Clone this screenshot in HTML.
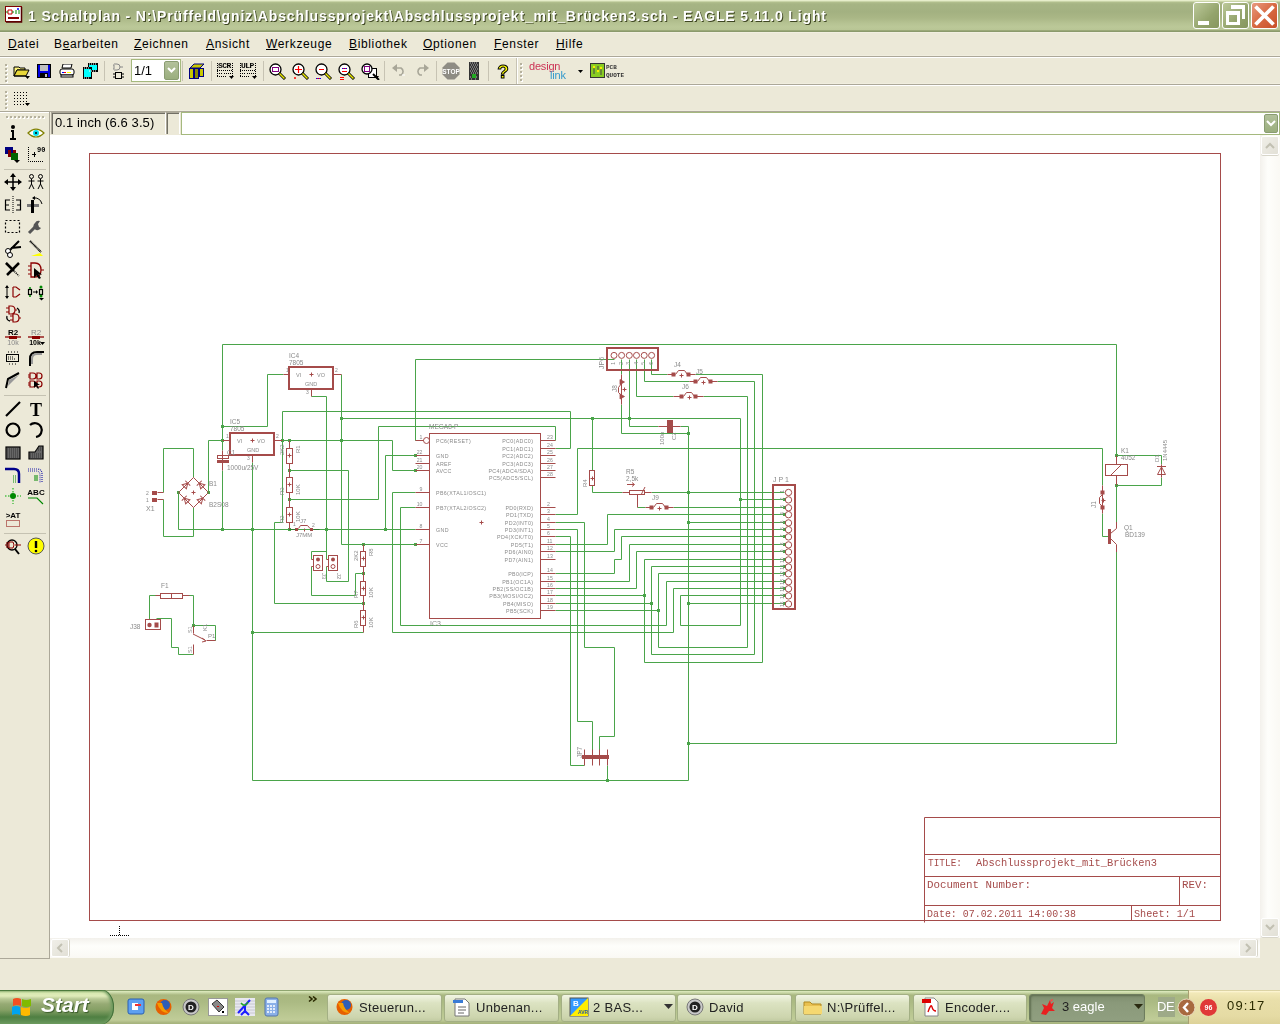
<!DOCTYPE html>
<html><head><meta charset="utf-8"><style>
*{margin:0;padding:0;box-sizing:border-box}
html,body{width:1280px;height:1024px;overflow:hidden;background:#ECE9D8;font-family:"Liberation Sans",sans-serif;font-size:12px;color:#000;position:relative}
.a{position:absolute;will-change:transform}
#title{left:0;top:0;width:1280px;height:32px;background:linear-gradient(#E6EDCA 0px,#E6EDCA 1px,#C9D4A8 1px,#C9D4A8 2px,#B3C08E 2px,#A6B484 4px,#A3B181 12px,#AAB786 18px,#B5C292 23px,#BBC898 27px,#B8C595 30px,#9AA878 30px,#9AA878 31px,#8B9A6C 31px,#8B9A6C 32px)}
#title .t{left:28px;top:8px;font-weight:bold;font-size:14px;color:#fff;text-shadow:1px 1px 0 #3E4622;letter-spacing:0.86px;white-space:nowrap}
.menu span{position:absolute;top:37px;font-size:12px;letter-spacing:0.65px}
.menu u{text-decoration:underline;text-underline-offset:1px}
.hl{position:absolute;left:0;width:1280px;height:1px}
.sep{position:absolute;width:1px;height:21px;background:#C5C2B2}
.grip{position:absolute;width:2px;background:repeating-linear-gradient(#fff 0 1px,#ACA899 1px 2px,transparent 2px 3px)}
.tb{position:absolute}
.btn{position:absolute;border-radius:3px;height:28px;top:994px;background:linear-gradient(#F2F5E4,#DCE3C2 30%,#CDD5AE 85%,#C2CBA2);border:1px solid #A3AF84;font-size:13px;color:#222;padding-left:31px;line-height:26px;white-space:nowrap;overflow:hidden;letter-spacing:0.3px}
</style></head><body>
<div id="title" class="a"><div class="a t">1 Schaltplan - N:\Prüffeld\gniz\Abschlussprojekt\Abschlussprojekt_mit_Brücken3.sch - EAGLE 5.11.0 Light</div></div><svg class="a" style="left:5px;top:6px" width="18" height="17" viewBox="0 0 18 17"><rect x="0.5" y="0.5" width="16" height="15" fill="#fff" stroke="#800000"/><path d="M16.5 1V16H1" stroke="#500" stroke-width="1.5" fill="none"/><path d="M3 4H7V8H3Z" fill="none" stroke="#C00"/><path d="M3 6H1M7 6H9M11 4V8M14 4V8" stroke="#080"/><path d="M3 12H14" stroke="#800" stroke-width="2"/><circle cx="13" cy="3" r="1" fill="#00f"/></svg><div class="a" style="left:1193px;top:2px;width:27px;height:27px;border:1px solid #fff;border-radius:3px;background:linear-gradient(135deg,#BCC99A,#94A46C 60%,#86965E)"></div><div class="a" style="left:1222px;top:2px;width:27px;height:27px;border:1px solid #fff;border-radius:3px;background:linear-gradient(135deg,#BCC99A,#94A46C 60%,#86965E)"></div><div class="a" style="left:1251px;top:2px;width:27px;height:27px;border:1px solid #fff;border-radius:3px;background:linear-gradient(135deg,#E89A80,#D86A42 50%,#C85028)"></div><div class="a" style="left:1198px;top:21px;width:11px;height:4px;background:#fff"></div><div class="a" style="left:1226px;top:11px;width:14px;height:14px;border:3px solid #fff;border-top-width:4px"></div><div class="a" style="left:1231px;top:5px;width:14px;height:14px;border:3px solid #fff;border-top-width:4px;border-left:none;border-bottom:none"></div><svg class="a" style="left:1253px;top:4px" width="23" height="23" viewBox="0 0 23 23"><path d="M2.5 2.5L20.5 20.5M20.5 2.5L2.5 20.5" stroke="#fff" stroke-width="3.8"/></svg><div class="menu"><span style="left:8px"><u>D</u>atei</span><span style="left:54px">B<u>e</u>arbeiten</span><span style="left:134px"><u>Z</u>eichnen</span><span style="left:206px"><u>A</u>nsicht</span><span style="left:266px"><u>W</u>erkzeuge</span><span style="left:349px"><u>B</u>ibliothek</span><span style="left:423px"><u>O</u>ptionen</span><span style="left:494px"><u>F</u>enster</span><span style="left:556px"><u>H</u>ilfe</span></div><div class="hl" style="top:32px;background:#F2EFE1"></div><div class="hl" style="top:55px;background:#F1EEDF"></div><div class="hl" style="top:56px;background:#ACA899"></div><div class="hl" style="top:57px;background:#fff"></div><div class="hl" style="top:83px;background:#F1EEDF"></div><div class="hl" style="top:84px;background:#ACA899"></div><div class="hl" style="top:85px;background:#fff"></div><div class="hl" style="top:110px;background:#F0EDDE"></div><div class="hl" style="top:111px;background:#ACA899"></div><svg class="a" style="left:13px;top:65px" width="18" height="15" viewBox="0 0 18 15"><path d="M1 2H6L7 3H12V5H4L1 11Z" fill="#FFF47A" stroke="#000" stroke-width="1"/><path d="M1 11L4 5H16L13 11Z" fill="#E8D83A" stroke="#000"/><path d="M1 11H13" stroke="#000"/></svg><svg class="a" style="left:25px;top:76px" width="5" height="3"><path d="M0 0H5L2.5 3Z" fill="#000"/></svg><svg class="a" style="left:37px;top:64px" width="14" height="14" viewBox="0 0 14 14"><rect x="0" y="0" width="14" height="14" fill="#000"/><rect x="1" y="1" width="12" height="12" fill="#0000E0"/><rect x="3" y="1" width="8" height="6" fill="#C0C0C0"/><rect x="3" y="9" width="8" height="4" fill="#000"/><rect x="8" y="10" width="2" height="3" fill="#C0C0C0"/></svg><svg class="a" style="left:59px;top:64px" width="16" height="14" viewBox="0 0 16 14"><path d="M4 0H13L12 4H3Z" fill="#fff" stroke="#000"/><rect x="1" y="5" width="14" height="6" rx="2" fill="#fff" stroke="#000"/><rect x="3" y="8" width="2" height="1" fill="#00f"/><rect x="5" y="8" width="2" height="1" fill="#f00"/><rect x="8" y="8" width="4" height="1" fill="#ff0"/><rect x="2" y="11" width="12" height="2" fill="#fff" stroke="#000"/></svg><svg class="a" style="left:83px;top:63px" width="15" height="16" viewBox="0 0 15 16"><rect x="5" y="0" width="10" height="9" fill="#000"/><rect x="6" y="2" width="8" height="5" fill="#00FFFF"/><rect x="0" y="4" width="9" height="12" fill="#000"/><rect x="1" y="6" width="7" height="8" fill="#00FFFF"/><path d="M6 1h1M8 1h1M10 1h1M12 1h1M1 5h1M3 5h1M5 5h1M1 15h1M3 15h1M5 15h1M6 8h1M8 8h1M10 8h1M12 8h1" stroke="#fff"/></svg><div class="a" style="left:104px;top:61px;width:1px;height:20px;background:#C7C3B3"></div><svg class="a" style="left:113px;top:62px" width="11" height="18" viewBox="0 0 11 18"><path d="M1 2H4A3 3 0 0 1 4 8H1M0 3H1M0 7H1M7 5H10" fill="none" stroke="#888"/><path d="M1 3V7" stroke="#888"/><rect x="2.5" y="10.5" width="6" height="6" fill="none" stroke="#000"/><path d="M0 12H2M0 15H2M9 12H11M9 15H11" stroke="#000"/></svg><div class="a" style="left:131px;top:59px;width:50px;height:23px;background:#fff;border:1px solid #A5B97E"></div><div class="a" style="left:134px;top:61px;font-size:13px;line-height:19px">1/1</div><div class="a" style="left:164px;top:61px;width:15px;height:19px;border-radius:2px;background:linear-gradient(#B3C19B,#9AAE7E);border:1px solid #8A9C72"></div><svg class="a" style="left:167px;top:67px" width="9" height="6" viewBox="0 0 9 6"><path d="M1 1L4.5 4.5L8 1" fill="none" stroke="#fff" stroke-width="2"/></svg><div class="a" style="left:182px;top:61px;width:1px;height:20px;background:#C7C3B3"></div><svg class="a" style="left:188px;top:63px" width="17" height="16" viewBox="0 0 17 16"><path d="M2 5L6 1H16L12 5Z" fill="#C8C800" stroke="#000080"/><rect x="1.5" y="5.5" width="4" height="10" fill="#C8C800" stroke="#000080"/><rect x="6.5" y="5.5" width="4" height="10" fill="#888800" stroke="#000080"/><rect x="11.5" y="5.5" width="4" height="8" fill="#C8C800" stroke="#000080"/></svg><div class="a" style="left:211px;top:61px;width:1px;height:20px;background:#C7C3B3"></div><div class="a" style="left:218px;top:61px;font:bold 8px 'Liberation Mono',monospace;letter-spacing:-0.6px">SCR</div><svg class="a" style="left:217px;top:63px" width="18" height="16" viewBox="0 0 18 16"><path d="M0 7.5H16M0 10.5H5M7 10.5H15M0 13.5H10M0.5 0V14" stroke="#000" stroke-dasharray="1 1" fill="none"/><path d="M15.5 0V13" stroke="#000" stroke-dasharray="1 1"/></svg><svg class="a" style="left:229px;top:76px" width="5" height="3"><path d="M0 0H5L2.5 3Z" fill="#000"/></svg><div class="a" style="left:241px;top:61px;font:bold 8px 'Liberation Mono',monospace;letter-spacing:-0.6px">ULP</div><svg class="a" style="left:240px;top:63px" width="18" height="16" viewBox="0 0 18 16"><path d="M0 7.5H16M0 10.5H5M7 10.5H15M0 13.5H10M0.5 0V14" stroke="#000" stroke-dasharray="1 1" fill="none"/><path d="M15.5 0V13" stroke="#000" stroke-dasharray="1 1"/></svg><svg class="a" style="left:252px;top:76px" width="5" height="3"><path d="M0 0H5L2.5 3Z" fill="#000"/></svg><div class="a" style="left:263px;top:61px;width:1px;height:20px;background:#C7C3B3"></div><svg class="a" style="left:269px;top:63px" width="18" height="17" viewBox="0 0 18 17"><circle cx="6.5" cy="6.5" r="5.5" fill="#fff" stroke="#000" stroke-width="1.3"/><path d="M10 10L16 16" stroke="#000" stroke-width="3"/><path d="M10.5 10.5L15.5 15.5" stroke="#E8E800" stroke-width="1.5"/><rect x="3.5" y="4.5" width="6" height="4" fill="none" stroke="#f00"/><rect x="3.5" y="4.5" width="6" height="4" fill="none" stroke="#00f" stroke-dasharray="1 1"/></svg><svg class="a" style="left:292px;top:63px" width="18" height="17" viewBox="0 0 18 17"><circle cx="6.5" cy="6.5" r="5.5" fill="#fff" stroke="#000" stroke-width="1.3"/><path d="M10 10L16 16" stroke="#000" stroke-width="3"/><path d="M10.5 10.5L15.5 15.5" stroke="#E8E800" stroke-width="1.5"/><path d="M6.5 3V10M3 6.5H10" stroke="#f00" stroke-width="1.2"/><path d="M2 15h2M3 14v2" stroke="#f00"/></svg><svg class="a" style="left:315px;top:63px" width="18" height="17" viewBox="0 0 18 17"><circle cx="6.5" cy="6.5" r="5.5" fill="#fff" stroke="#000" stroke-width="1.3"/><path d="M10 10L16 16" stroke="#000" stroke-width="3"/><path d="M10.5 10.5L15.5 15.5" stroke="#E8E800" stroke-width="1.5"/><path d="M4 6.5H9" stroke="#f00"/><path d="M1 15.5H6" stroke="#f00"/><path d="M1 15.5H6" stroke="#00f" stroke-dasharray="1 1"/></svg><svg class="a" style="left:338px;top:63px" width="18" height="17" viewBox="0 0 18 17"><circle cx="6.5" cy="6.5" r="5.5" fill="#fff" stroke="#000" stroke-width="1.3"/><path d="M10 10L16 16" stroke="#000" stroke-width="3"/><path d="M10.5 10.5L15.5 15.5" stroke="#E8E800" stroke-width="1.5"/><path d="M4 5.5H9M4 8.5H9" stroke="#f00"/><path d="M4 5.5H9" stroke="#00f" stroke-dasharray="1 1"/><path d="M2 14.5H6M2 16.5H6" stroke="#f00"/></svg><svg class="a" style="left:361px;top:63px" width="19" height="17" viewBox="0 0 19 17"><rect x="7.5" y="5.5" width="8" height="9" fill="#fff" stroke="#000"/><circle cx="6" cy="6" r="5" fill="#fff" stroke="#000" stroke-width="1.3"/><rect x="3.5" y="3.5" width="5" height="5" fill="none" stroke="#f00"/><rect x="3.5" y="3.5" width="5" height="5" fill="none" stroke="#00f" stroke-dasharray="1 1"/><path d="M12 11L18 17" stroke="#000" stroke-width="2"/><path d="M14 13h4l-2 3z" fill="#000"/></svg><div class="a" style="left:384px;top:61px;width:1px;height:20px;background:#C7C3B3"></div><svg class="a" style="left:392px;top:64px" width="14" height="12" viewBox="0 0 14 12"><path d="M4 4H9A4 4 0 0 1 9 11H7" fill="none" stroke="#A8A698" stroke-width="1.6"/><path d="M0 4L5 0V8Z" fill="#A8A698"/><path d="M10 11h3" stroke="#fff"/></svg><svg class="a" style="left:415px;top:64px" width="14" height="12" viewBox="0 0 14 12"><path d="M10 4H5A4 4 0 0 0 5 11H7" fill="none" stroke="#A8A698" stroke-width="1.6"/><path d="M14 4L9 0V8Z" fill="#A8A698"/></svg><div class="a" style="left:436px;top:61px;width:1px;height:20px;background:#C7C3B3"></div><svg class="a" style="left:442px;top:62px" width="18" height="18" viewBox="0 0 18 18"><path d="M5.5 0.5H12.5L17.5 5.5V12.5L12.5 17.5H5.5L0.5 12.5V5.5Z" fill="#8E8C84"/><text x="9" y="12" font-family="Liberation Sans" font-weight="bold" font-size="6.5" fill="#fff" text-anchor="middle">STOP</text></svg><svg class="a" style="left:469px;top:62px" width="10" height="18" viewBox="0 0 10 18"><rect x="0" y="0" width="10" height="18" fill="#333"/><path d="M1 1h1M3 1h1M5 1h1M7 1h1M2 3h1M4 3h1M6 3h1M8 3h1M1 5h1M3 5h1M5 5h1M7 5h1M2 7h1M4 7h1M6 7h1M8 7h1M1 9h1M3 9h1M5 9h1M7 9h1M2 11h1M4 11h1M6 11h1M8 11h1M1 15h1M3 15h1M7 15h1M2 17h1M6 17h1" stroke="#bbb"/><rect x="3" y="12" width="4" height="4" fill="#22AA22"/></svg><div class="a" style="left:488px;top:61px;width:1px;height:20px;background:#C7C3B3"></div><svg class="a" style="left:496px;top:62px" width="14" height="18" viewBox="0 0 14 18"><text x="7" y="16" font-family="Liberation Sans" font-weight="bold" font-size="19" fill="#FFFF00" stroke="#000" stroke-width="1" text-anchor="middle">?</text></svg><div class="a" style="left:516px;top:58px;width:1px;height:26px;background:#C7C3B3"></div><div class="a" style="left:517px;top:58px;width:1px;height:26px;background:#fff"></div><div class="a" style="left:520px;top:63px;width:2px;height:2px;background:#B5B19E;box-shadow:1px 1px 0 #fff"></div><div class="a" style="left:520px;top:67px;width:2px;height:2px;background:#B5B19E;box-shadow:1px 1px 0 #fff"></div><div class="a" style="left:520px;top:71px;width:2px;height:2px;background:#B5B19E;box-shadow:1px 1px 0 #fff"></div><div class="a" style="left:520px;top:75px;width:2px;height:2px;background:#B5B19E;box-shadow:1px 1px 0 #fff"></div><div class="a" style="left:520px;top:79px;width:2px;height:2px;background:#B5B19E;box-shadow:1px 1px 0 #fff"></div><div class="a" style="left:529px;top:60px;font:11px 'Liberation Sans',sans-serif;color:#CC3355;letter-spacing:-0.2px">design</div><div class="a" style="left:550px;top:69px;font:11px 'Liberation Sans',sans-serif;color:#3399CC;letter-spacing:-0.2px">link</div><svg class="a" style="left:578px;top:70px" width="5" height="3"><path d="M0 0H5L2.5 3Z" fill="#000"/></svg><svg class="a" style="left:590px;top:63px" width="15" height="15" viewBox="0 0 15 15"><rect x="0.5" y="0.5" width="14" height="14" fill="#88CC22" stroke="#333"/><path d="M4 4V11M8 3V8M11 5V12" stroke="#444"/><circle cx="4" cy="4" r="1.2" fill="#FFEE00"/><circle cx="8" cy="8" r="1.2" fill="#FFEE00"/><circle cx="11" cy="5" r="1.2" fill="#FFEE00"/></svg><div class="a" style="left:606px;top:64px;font:bold 6px 'Liberation Mono',monospace;line-height:8px;color:#333">PCB<br>QUOTE</div><div class="a" style="left:5px;top:64px;width:2px;height:2px;background:#B5B19E;box-shadow:1px 1px 0 #fff"></div><div class="a" style="left:5px;top:68px;width:2px;height:2px;background:#B5B19E;box-shadow:1px 1px 0 #fff"></div><div class="a" style="left:5px;top:72px;width:2px;height:2px;background:#B5B19E;box-shadow:1px 1px 0 #fff"></div><div class="a" style="left:5px;top:76px;width:2px;height:2px;background:#B5B19E;box-shadow:1px 1px 0 #fff"></div><div class="a" style="left:5px;top:80px;width:2px;height:2px;background:#B5B19E;box-shadow:1px 1px 0 #fff"></div><div class="a" style="left:5px;top:91px;width:2px;height:2px;background:#B5B19E;box-shadow:1px 1px 0 #fff"></div><div class="a" style="left:5px;top:95px;width:2px;height:2px;background:#B5B19E;box-shadow:1px 1px 0 #fff"></div><div class="a" style="left:5px;top:99px;width:2px;height:2px;background:#B5B19E;box-shadow:1px 1px 0 #fff"></div><div class="a" style="left:5px;top:103px;width:2px;height:2px;background:#B5B19E;box-shadow:1px 1px 0 #fff"></div><div class="a" style="left:5px;top:107px;width:2px;height:2px;background:#B5B19E;box-shadow:1px 1px 0 #fff"></div><svg class="a" style="left:13px;top:91px" width="18" height="16" viewBox="0 0 18 16"><rect x="1" y="1" width="1" height="1" fill="#000"/><rect x="1" y="4" width="1" height="1" fill="#000"/><rect x="1" y="7" width="1" height="1" fill="#000"/><rect x="1" y="10" width="1" height="1" fill="#000"/><rect x="1" y="13" width="1" height="1" fill="#000"/><rect x="4" y="1" width="1" height="1" fill="#000"/><rect x="4" y="4" width="1" height="1" fill="#000"/><rect x="4" y="7" width="1" height="1" fill="#000"/><rect x="4" y="10" width="1" height="1" fill="#000"/><rect x="4" y="13" width="1" height="1" fill="#000"/><rect x="7" y="1" width="1" height="1" fill="#000"/><rect x="7" y="4" width="1" height="1" fill="#000"/><rect x="7" y="7" width="1" height="1" fill="#000"/><rect x="7" y="10" width="1" height="1" fill="#000"/><rect x="7" y="13" width="1" height="1" fill="#000"/><rect x="10" y="1" width="1" height="1" fill="#000"/><rect x="10" y="4" width="1" height="1" fill="#000"/><rect x="10" y="7" width="1" height="1" fill="#000"/><rect x="10" y="10" width="1" height="1" fill="#000"/><rect x="10" y="13" width="1" height="1" fill="#000"/><rect x="13" y="1" width="1" height="1" fill="#000"/><rect x="13" y="4" width="1" height="1" fill="#000"/><rect x="13" y="7" width="1" height="1" fill="#000"/><rect x="13" y="10" width="1" height="1" fill="#000"/><rect x="13" y="13" width="1" height="1" fill="#000"/></svg><svg class="a" style="left:25px;top:103px" width="5" height="3"><path d="M0 0H5L2.5 3Z" fill="#000"/></svg><div class="a" style="left:0;top:112px;width:50px;height:847px;background:#ECE9D8;border-right:1px solid #ACA899"></div><div class="a" style="left:0;top:958px;width:50px;height:1px;background:#ACA899"></div><div class="a" style="left:0;top:112px;width:49px;height:1px;background:#fff"></div><div class="a" style="left:6px;top:116px;width:2px;height:2px;background:#B5B19E;box-shadow:1px 1px 0 #fff"></div><div class="a" style="left:10px;top:116px;width:2px;height:2px;background:#B5B19E;box-shadow:1px 1px 0 #fff"></div><div class="a" style="left:14px;top:116px;width:2px;height:2px;background:#B5B19E;box-shadow:1px 1px 0 #fff"></div><div class="a" style="left:18px;top:116px;width:2px;height:2px;background:#B5B19E;box-shadow:1px 1px 0 #fff"></div><div class="a" style="left:22px;top:116px;width:2px;height:2px;background:#B5B19E;box-shadow:1px 1px 0 #fff"></div><div class="a" style="left:26px;top:116px;width:2px;height:2px;background:#B5B19E;box-shadow:1px 1px 0 #fff"></div><div class="a" style="left:30px;top:116px;width:2px;height:2px;background:#B5B19E;box-shadow:1px 1px 0 #fff"></div><div class="a" style="left:34px;top:116px;width:2px;height:2px;background:#B5B19E;box-shadow:1px 1px 0 #fff"></div><div class="a" style="left:38px;top:116px;width:2px;height:2px;background:#B5B19E;box-shadow:1px 1px 0 #fff"></div><div class="a" style="left:42px;top:116px;width:2px;height:2px;background:#B5B19E;box-shadow:1px 1px 0 #fff"></div><svg class="a" style="left:4px;top:124px" width="18" height="18" viewBox="0 0 18 18"><circle cx="9" cy="3" r="2" fill="#000"/><path d="M7 6H10V14H12V16H6V14H8V8H7Z" fill="#000"/></svg><svg class="a" style="left:27px;top:124px" width="18" height="18" viewBox="0 0 18 18"><path d="M1 9Q9 1 17 9Q9 17 1 9Z" fill="#fff" stroke="#808000" stroke-width="1.2"/><circle cx="9" cy="9" r="3" fill="#00E0F0"/><circle cx="9" cy="9" r="1" fill="#000"/></svg><svg class="a" style="left:4px;top:146px" width="18" height="18" viewBox="0 0 18 18"><rect x="1" y="1" width="8" height="7" fill="#000080"/><rect x="4" y="4" width="8" height="7" fill="#800000" style="mix-blend-mode:normal"/><rect x="1" y="1" width="8" height="7" fill="#000080"/><rect x="7" y="7" width="7" height="7" fill="#006400"/><rect x="4" y="4" width="3" height="6" fill="#800000"/><rect x="4" y="8" width="3" height="3" fill="#800000"/><path d="M10 14h6l-3 3z" fill="#000"/></svg><svg class="a" style="left:27px;top:146px" width="18" height="18" viewBox="0 0 18 18"><path d="M1.5 1V15.5H17" fill="none" stroke="#000" stroke-dasharray="1 1"/><path d="M5 8.5H9M7.5 6V11" stroke="#000"/><text x="10" y="6" font-family="Liberation Mono" font-weight="bold" font-size="7" fill="#000">90</text></svg><div class="a" style="left:4px;top:169px;width:42px;height:1px;background:#C5C2B2"></div><svg class="a" style="left:4px;top:173px" width="18" height="18" viewBox="0 0 18 18"><path d="M9 1V17M1 9H17" stroke="#000" stroke-width="1.5"/><path d="M9 0L6 4H12ZM9 18L6 14H12ZM0 9L4 6V12ZM18 9L14 6V12Z" fill="#000"/></svg><svg class="a" style="left:27px;top:173px" width="18" height="18" viewBox="0 0 18 18"><circle cx="4.5" cy="3.5" r="2" fill="none" stroke="#000"/><circle cx="13.5" cy="3.5" r="2" fill="none" stroke="#000"/><path d="M4.5 6V11M1.5 8H7.5M4.5 11L2 16M4.5 11L7 16M13.5 6V11M10.5 8H16.5M13.5 11L11 16M13.5 11L16 16" stroke="#000" fill="none"/></svg><svg class="a" style="left:4px;top:196px" width="18" height="18" viewBox="0 0 18 18"><path d="M6 4H1.5V14H6M1 9H5M12 4H16.5V14H12M13 9H17" fill="none" stroke="#000" stroke-width="1.2"/><path d="M9 0V18" stroke="#000" stroke-dasharray="1 1"/></svg><svg class="a" style="left:27px;top:196px" width="18" height="18" viewBox="0 0 18 18"><rect x="0" y="8" width="12" height="3" fill="#777"/><rect x="4" y="4" width="3" height="13" fill="#000"/><path d="M6 2Q13 1 15 8" fill="none" stroke="#000"/><path d="M5 2L8 0V4Z" fill="#000"/></svg><svg class="a" style="left:4px;top:218px" width="18" height="18" viewBox="0 0 18 18"><rect x="1.5" y="2.5" width="14" height="12" fill="none" stroke="#000" stroke-width="1.2" stroke-dasharray="2 2"/></svg><svg class="a" style="left:27px;top:218px" width="18" height="18" viewBox="0 0 18 18"><path d="M2 15L9 8" stroke="#555" stroke-width="3"/><path d="M8 5A4 4 0 1 0 14 10L12 9L11 6L13 3A4 4 0 0 0 8 5" fill="#555"/></svg><svg class="a" style="left:4px;top:240px" width="18" height="18" viewBox="0 0 18 18"><path d="M6 10L15 1M7 8L17 7" stroke="#000" stroke-width="2"/><circle cx="4" cy="11" r="2.5" fill="#fff" stroke="#000"/><circle cx="6" cy="15" r="2.5" fill="#fff" stroke="#000"/></svg><svg class="a" style="left:27px;top:240px" width="18" height="18" viewBox="0 0 18 18"><path d="M3 1L14 12" stroke="#000" stroke-width="2" stroke-dasharray="1 0.5"/><path d="M4 16H16L13 13L10 14Z" fill="#FFFF00"/></svg><svg class="a" style="left:4px;top:261px" width="18" height="18" viewBox="0 0 18 18"><path d="M2 2L15 15" stroke="#000" stroke-width="1.5" stroke-dasharray="1 1"/><path d="M2 2L10 10" stroke="#000" stroke-width="2.5"/><path d="M15 2L3 14" stroke="#000" stroke-width="2.5"/></svg><svg class="a" style="left:27px;top:261px" width="18" height="18" viewBox="0 0 18 18"><path d="M4 2H8Q14 2 14 9Q14 16 8 16H4Z" fill="none" stroke="#8B0000" stroke-width="1.3"/><path d="M1 5H4M1 9H4M1 13H4M14 9H17" stroke="#8B0000"/><path d="M7 7L7 17L9.5 14.5L12 18L14 17L11.5 13.5H15Z" fill="#000"/></svg><svg class="a" style="left:4px;top:283px" width="18" height="18" viewBox="0 0 18 18"><path d="M3 3V15" stroke="#000"/><path d="M3 2L1 5H5ZM3 16L1 13H5Z" fill="#000"/><path d="M9 4H12L16 7M9 14H12L16 11M9 4V14" fill="none" stroke="#8B0000" stroke-width="1.2"/></svg><svg class="a" style="left:27px;top:283px" width="18" height="18" viewBox="0 0 18 18"><rect x="1.5" y="6.5" width="3" height="5" fill="none" stroke="#000" stroke-width="1.2"/><rect x="12.5" y="6.5" width="3" height="5" fill="none" stroke="#000" stroke-width="1.2"/><path d="M6 9H10" stroke="#000"/><path d="M11 9L9 7V11Z" fill="#000"/><circle cx="3" cy="5" r="1" fill="#080"/><circle cx="3" cy="13" r="1" fill="#080"/><circle cx="14" cy="4" r="1.5" fill="#080"/><circle cx="14" cy="13" r="1.5" fill="#080"/><path d="M12 15h5l-2.5 2.5z" fill="#000"/></svg><svg class="a" style="left:4px;top:305px" width="18" height="18" viewBox="0 0 18 18"><path d="M5 1H7Q11 1 11 5Q11 9 7 9H5ZM9 9H11Q15 9 15 13Q15 17 11 17H9Z" fill="none" stroke="#8B0000" stroke-width="1.2"/><path d="M2 3H5M2 7H5M11 5H13M6 11H9M6 15H9M15 13H17" stroke="#8B0000"/><path d="M13 3Q16 5 15 8M3 11Q2 15 6 16" fill="none" stroke="#000" stroke-width="1.3"/></svg><svg class="a" style="left:4px;top:328px" width="18" height="18" viewBox="0 0 18 18"><text x="9" y="7" font-family="Liberation Sans" font-weight="bold" font-size="8" text-anchor="middle" fill="#000">R2</text><path d="M1 9H17" stroke="#8B0000" stroke-width="1.3"/><rect x="5" y="8" width="8" height="3" fill="#8B0000"/><text x="9" y="17" font-family="Liberation Sans" font-size="7" text-anchor="middle" fill="#888">10k</text></svg><svg class="a" style="left:27px;top:328px" width="18" height="18" viewBox="0 0 18 18"><text x="9" y="7" font-family="Liberation Sans" font-size="8" text-anchor="middle" fill="#888">R2</text><path d="M1 9H17" stroke="#8B0000" stroke-width="1.3"/><rect x="5" y="8" width="8" height="3" fill="#8B0000"/><text x="8" y="17" font-family="Liberation Sans" font-weight="bold" font-size="7" text-anchor="middle" fill="#000">10k</text><path d="M13 14h5l-2.5 3z" fill="#000"/></svg><svg class="a" style="left:4px;top:349px" width="18" height="18" viewBox="0 0 18 18"><rect x="2.5" y="5.5" width="12" height="7" fill="none" stroke="#000"/><path d="M4 3h1M7 3h1M10 3h1M13 3h1M5 15h1M8 15h1M11 15h1" stroke="#000"/><path d="M4 8H9M4 10H11" stroke="#000" stroke-dasharray="1 1"/></svg><svg class="a" style="left:27px;top:349px" width="18" height="18" viewBox="0 0 18 18"><path d="M3 17V10Q3 3 10 3H17" fill="none" stroke="#000" stroke-width="2"/><path d="M5 15V10Q5 5 10 5H15" fill="none" stroke="#999" stroke-width="2"/></svg><svg class="a" style="left:4px;top:371px" width="18" height="18" viewBox="0 0 18 18"><path d="M2 17L4 8L15 2" fill="none" stroke="#000" stroke-width="2"/><path d="M4 15L5 9L15 4Z" fill="#999"/></svg><svg class="a" style="left:27px;top:371px" width="18" height="18" viewBox="0 0 18 18"><path d="M3 2H6Q9 2 9 5Q9 8 6 8H3ZM10 2H12Q15 2 15 5Q15 8 12 8H10ZM3 10H6Q9 10 9 13Q9 16 6 16H3ZM10 10H12Q15 10 15 13Q15 16 12 16H10Z" fill="none" stroke="#8B0000" stroke-width="1.2"/><path d="M1 4H3M1 6H3M1 12H3M1 14H3" stroke="#8B0000"/><path d="M7 10L7 17L9 15L11 18L12 17L10 14H13Z" fill="#000"/></svg><div class="a" style="left:4px;top:395px;width:42px;height:1px;background:#C5C2B2"></div><svg class="a" style="left:4px;top:400px" width="18" height="18" viewBox="0 0 18 18"><path d="M2 16L16 2" stroke="#000" stroke-width="2.2"/></svg><svg class="a" style="left:27px;top:400px" width="18" height="18" viewBox="0 0 18 18"><text x="9" y="16" font-family="Liberation Serif" font-weight="bold" font-size="18" text-anchor="middle" fill="#000">T</text></svg><svg class="a" style="left:4px;top:421px" width="18" height="18" viewBox="0 0 18 18"><circle cx="9" cy="9" r="6.5" fill="none" stroke="#000" stroke-width="2.2"/></svg><svg class="a" style="left:27px;top:421px" width="18" height="18" viewBox="0 0 18 18"><path d="M3 4A7 7 0 1 1 9 16" fill="none" stroke="#000" stroke-width="2.2"/></svg><svg class="a" style="left:4px;top:444px" width="18" height="18" viewBox="0 0 18 18"><rect x="2" y="3" width="14" height="12" fill="#666" stroke="#000" stroke-width="1.2"/><path d="M3 5h12M3 7h12M3 9h12M3 11h12M3 13h12" stroke="#333" stroke-dasharray="1 1"/></svg><svg class="a" style="left:27px;top:444px" width="18" height="18" viewBox="0 0 18 18"><path d="M2 8L8 8L12 2H16V15H2Z" fill="#666" stroke="#000" stroke-width="1.2"/><path d="M3 10h12M3 12h12M3 14h12M9 6h6M11 4h4" stroke="#333" stroke-dasharray="1 1"/></svg><svg class="a" style="left:4px;top:466px" width="18" height="18" viewBox="0 0 18 18"><path d="M1 3H10Q15 3 15 8V17" fill="none" stroke="#00008B" stroke-width="2.5"/><path d="M9 10h1M11 10h1M9 12h1M11 12h1M9 14h1M11 14h1M9 16h1M11 16h1" stroke="#080"/></svg><svg class="a" style="left:27px;top:466px" width="18" height="18" viewBox="0 0 18 18"><path d="M1 3H10Q15 3 15 8V17" fill="none" stroke="#2020AA" stroke-width="1.2" stroke-dasharray="1 1"/><path d="M1 5H9Q13 5 13 9V17" fill="none" stroke="#2020AA" stroke-width="1" stroke-dasharray="1 1"/><path d="M7 10H11M7 12H11M7 14H11" stroke="#080"/></svg><svg class="a" style="left:4px;top:487px" width="18" height="18" viewBox="0 0 18 18"><path d="M1 9H17M9 1V17" stroke="#0A0" stroke-dasharray="1.5 1.5"/><circle cx="9" cy="9" r="3" fill="#080"/></svg><svg class="a" style="left:27px;top:487px" width="18" height="18" viewBox="0 0 18 18"><text x="9" y="8" font-family="Liberation Sans" font-weight="bold" font-size="8" text-anchor="middle" fill="#000">ABC</text><path d="M1 11H10L16 17" fill="none" stroke="#080" stroke-width="1.2"/></svg><svg class="a" style="left:4px;top:510px" width="18" height="18" viewBox="0 0 18 18"><text x="9" y="8" font-family="Liberation Sans" font-weight="bold" font-size="8" text-anchor="middle" fill="#000">&gt;AT</text><rect x="2.5" y="10.5" width="13" height="6" fill="none" stroke="#8B0000" stroke-dasharray="1 1"/></svg><div class="a" style="left:4px;top:533px;width:42px;height:1px;background:#C5C2B2"></div><svg class="a" style="left:4px;top:537px" width="18" height="18" viewBox="0 0 18 18"><circle cx="8" cy="8" r="5" fill="none" stroke="#000" stroke-width="1.3"/><path d="M5 5H9Q11 8 9 11H5ZM1 8H5M11 8H17M2 6H5M2 10H5" fill="none" stroke="#8B0000"/><path d="M11 12L15 17" stroke="#000" stroke-width="2"/></svg><svg class="a" style="left:27px;top:537px" width="18" height="18" viewBox="0 0 18 18"><circle cx="9" cy="9" r="8" fill="#FFFF00" stroke="#555"/><path d="M9 4V11" stroke="#000" stroke-width="2.4"/><circle cx="9" cy="14" r="1.3" fill="#000"/></svg><div class="a" style="left:50px;top:112px;width:1230px;height:22px;background:#ECE9D8"></div><div class="a" style="left:51px;top:112px;width:115px;height:22px;border-left:1px solid #ACA899;border-top:1px solid #ACA899;border-right:1px solid #fff"></div><div class="a" style="left:52px;top:113px;width:113px;height:21px;border-left:1px solid #716F64;border-top:1px solid #716F64"></div><div class="a" style="left:55px;top:115px;font-size:13px;letter-spacing:0.1px;white-space:nowrap">0.1 inch (6.6 3.5)</div><div class="a" style="left:166px;top:112px;width:14px;height:22px;border-left:1px solid #ACA899;border-top:1px solid #ACA899;border-right:1px solid #fff"></div><div class="a" style="left:167px;top:113px;width:12px;height:21px;border-left:1px solid #716F64;border-top:1px solid #716F64"></div><div class="a" style="left:181px;top:112px;width:1099px;height:23px;background:#fff;border:1px solid #A5B97E"></div><div class="a" style="left:1264px;top:114px;width:14px;height:19px;border-radius:2px;background:linear-gradient(#B3C19B,#9AAE7E);border:1px solid #8A9C72"></div><svg class="a" style="left:1266px;top:120px" width="10" height="7" viewBox="0 0 10 7"><path d="M1 1L5 5L9 1" fill="none" stroke="#fff" stroke-width="2"/></svg><div class="a" style="left:50px;top:135px;width:1210px;height:803px;background:#fff"></div><div class="a" style="left:1260px;top:135px;width:20px;height:803px;background:linear-gradient(90deg,#F3F1EC,#FEFEFB 40%,#FAF9F4)"></div><div class="a" style="left:1261px;top:136px;width:18px;height:19px;border:1px solid #fff;border-radius:2px;background:linear-gradient(135deg,#F0EFE8,#E2E0D6);box-shadow:0 1px 0 #D8D6CA"></div><svg class="a" style="left:1265px;top:142px" width="10" height="7" viewBox="0 0 10 7"><path d="M1 6L5 2L9 6" fill="none" stroke="#C2C0B2" stroke-width="2"/></svg><div class="a" style="left:1261px;top:918px;width:18px;height:19px;border:1px solid #fff;border-radius:2px;background:linear-gradient(135deg,#F0EFE8,#E2E0D6);box-shadow:0 1px 0 #D8D6CA"></div><svg class="a" style="left:1265px;top:924px" width="10" height="7" viewBox="0 0 10 7"><path d="M1 1L5 5L9 1" fill="none" stroke="#C2C0B2" stroke-width="2"/></svg><div class="a" style="left:50px;top:938px;width:1210px;height:20px;background:linear-gradient(#F3F1EC,#FEFEFB 40%,#FAF9F4)"></div><div class="a" style="left:51px;top:939px;width:18px;height:18px;border:1px solid #fff;border-radius:2px;background:linear-gradient(135deg,#F0EFE8,#E2E0D6);box-shadow:1px 0 0 #D8D6CA"></div><svg class="a" style="left:56px;top:943px" width="7" height="10" viewBox="0 0 7 10"><path d="M6 1L2 5L6 9" fill="none" stroke="#C2C0B2" stroke-width="2"/></svg><div class="a" style="left:1239px;top:939px;width:18px;height:18px;border:1px solid #fff;border-radius:2px;background:linear-gradient(135deg,#F0EFE8,#E2E0D6);box-shadow:1px 0 0 #D8D6CA"></div><svg class="a" style="left:1245px;top:943px" width="7" height="10" viewBox="0 0 7 10"><path d="M1 1L5 5L1 9" fill="none" stroke="#C2C0B2" stroke-width="2"/></svg>
<svg class="a" style="left:0;top:0;overflow:hidden;will-change:transform" width="1280" height="1024" viewBox="0 0 1280 1024" font-family="Liberation Sans, sans-serif"><defs><clipPath id="cv"><rect x="50" y="135" width="1210" height="803"/></clipPath></defs><g clip-path="url(#cv)"><rect x="89.5" y="153.5" width="1131.0" height="767.0" fill="none" stroke="#A54B4A" stroke-width="1"/><path d="M924.5 817.5 L1220.5 817.5" fill="none" stroke="#A54B4A" stroke-width="1"/><path d="M924.5 817.5 L924.5 922.5" fill="none" stroke="#A54B4A" stroke-width="1"/><path d="M924.5 854.5 L1220.5 854.5" fill="none" stroke="#A54B4A" stroke-width="1"/><path d="M924.5 876.5 L1220.5 876.5" fill="none" stroke="#A54B4A" stroke-width="1"/><path d="M924.5 905.5 L1220.5 905.5" fill="none" stroke="#A54B4A" stroke-width="1"/><path d="M1179.5 876.5 L1179.5 905.5" fill="none" stroke="#A54B4A" stroke-width="1"/><path d="M1131.5 905.5 L1131.5 920.5" fill="none" stroke="#A54B4A" stroke-width="1"/><text x="928" y="866" fill="#A54B4A" font-family="Liberation Mono" font-size="11.5" lengthAdjust="spacingAndGlyphs" textLength="34">TITLE:</text><text x="976" y="866" fill="#A54B4A" font-family="Liberation Mono" font-size="11.5" lengthAdjust="spacingAndGlyphs" textLength="181">Abschlussprojekt_mit_Brücken3</text><text x="927" y="888" fill="#A54B4A" font-family="Liberation Mono" font-size="11.5" lengthAdjust="spacingAndGlyphs" textLength="104">Document Number:</text><text x="1182" y="888" fill="#A54B4A" font-family="Liberation Mono" font-size="11.5" lengthAdjust="spacingAndGlyphs" textLength="26">REV:</text><text x="927" y="917" fill="#A54B4A" font-family="Liberation Mono" font-size="11.5" lengthAdjust="spacingAndGlyphs" textLength="149">Date: 07.02.2011  14:00:38</text><text x="1134" y="917" fill="#A54B4A" font-family="Liberation Mono" font-size="11.5" lengthAdjust="spacingAndGlyphs" textLength="61">Sheet: 1/1</text><path d="M110 935.5H129M119.5 926V935" stroke="#000" stroke-dasharray="1 1" fill="none"/><path d="M222.5 344.5 L1116.5 344.5 L1116.5 455.5" fill="none" stroke="#4AA44A" stroke-width="1"/><path d="M222.5 344.5 L222.5 450.5" fill="none" stroke="#4AA44A" stroke-width="1"/><path d="M222.5 470.5 L222.5 529.5" fill="none" stroke="#4AA44A" stroke-width="1"/><path d="M222.5 426.5 L267.5 426.5 L267.5 374.5 L283.5 374.5" fill="none" stroke="#4AA44A" stroke-width="1"/><path d="M341.5 374.5 L341.5 544.5" fill="none" stroke="#4AA44A" stroke-width="1"/><path d="M311.5 396.5 L326.5 396.5 L326.5 559.5" fill="none" stroke="#4AA44A" stroke-width="1"/><path d="M326.5 551.5 L311.5 551.5 L311.5 559.5" fill="none" stroke="#4AA44A" stroke-width="1"/><path d="M311.5 566.5 L311.5 595.5 L355.5 595.5 L355.5 573.5 L363.5 573.5" fill="none" stroke="#4AA44A" stroke-width="1"/><path d="M326.5 566.5 L326.5 581.5 L348.5 581.5 L348.5 470.5 L289.5 470.5" fill="none" stroke="#4AA44A" stroke-width="1"/><path d="M208.5 492.5 L208.5 440.5 L222.5 440.5" fill="none" stroke="#4AA44A" stroke-width="1"/><path d="M282.5 440.5 L392.5 440.5 L392.5 470.5 L415.5 470.5" fill="none" stroke="#4AA44A" stroke-width="1"/><path d="M282.5 411.5 L282.5 522.5 L274.5 522.5 L274.5 603.5 L363.5 603.5" fill="none" stroke="#4AA44A" stroke-width="1"/><path d="M289.5 499.5 L378.5 499.5 L378.5 426.5 L555.5 426.5 L555.5 440.5" fill="none" stroke="#4AA44A" stroke-width="1"/><path d="M282.5 411.5 L570.5 411.5 L570.5 448.5 L555.5 448.5" fill="none" stroke="#4AA44A" stroke-width="1"/><path d="M341.5 418.5 L740.5 418.5 L740.5 625.5 L680.5 625.5 L680.5 595.5 L784.5 595.5" fill="none" stroke="#4AA44A" stroke-width="1"/><path d="M614.5 359.5 L415.5 359.5 L415.5 440.5 L423.5 440.5" fill="none" stroke="#4AA44A" stroke-width="1"/><path d="M178.5 492.5 L178.5 529.5 L415.5 529.5" fill="none" stroke="#4AA44A" stroke-width="1"/><path d="M193.5 507.5 L193.5 536.5 L163.5 536.5 L163.5 499.5" fill="none" stroke="#4AA44A" stroke-width="1"/><path d="M163.5 492.5 L163.5 448.5 L193.5 448.5 L193.5 477.5" fill="none" stroke="#4AA44A" stroke-width="1"/><path d="M252.5 462.5 L252.5 780.5 L688.5 780.5 L688.5 426.5 L680.5 426.5" fill="none" stroke="#4AA44A" stroke-width="1"/><path d="M385.5 455.5 L415.5 455.5" fill="none" stroke="#4AA44A" stroke-width="1"/><path d="M385.5 455.5 L385.5 529.5" fill="none" stroke="#4AA44A" stroke-width="1"/><path d="M415.5 492.5 L392.5 492.5 L392.5 632.5 L673.5 632.5 L673.5 588.5 L784.5 588.5" fill="none" stroke="#4AA44A" stroke-width="1"/><path d="M415.5 507.5 L400.5 507.5 L400.5 625.5 L666.5 625.5 L666.5 581.5 L784.5 581.5" fill="none" stroke="#4AA44A" stroke-width="1"/><path d="M341.5 544.5 L415.5 544.5" fill="none" stroke="#4AA44A" stroke-width="1"/><path d="M252.5 632.5 L363.5 632.5" fill="none" stroke="#4AA44A" stroke-width="1"/><path d="M621.5 359.5 L621.5 374.5" fill="none" stroke="#4AA44A" stroke-width="1"/><path d="M621.5 404.5 L621.5 433.5 L688.5 433.5" fill="none" stroke="#4AA44A" stroke-width="1"/><path d="M629.5 359.5 L629.5 426.5 L658.5 426.5" fill="none" stroke="#4AA44A" stroke-width="1"/><path d="M636.5 359.5 L636.5 396.5 L673.5 396.5" fill="none" stroke="#4AA44A" stroke-width="1"/><path d="M703.5 396.5 L747.5 396.5 L747.5 647.5 L658.5 647.5 L658.5 573.5 L784.5 573.5" fill="none" stroke="#4AA44A" stroke-width="1"/><path d="M644.5 359.5 L644.5 381.5 L689.5 381.5" fill="none" stroke="#4AA44A" stroke-width="1"/><path d="M717.5 381.5 L754.5 381.5 L754.5 654.5 L651.5 654.5 L651.5 566.5 L784.5 566.5" fill="none" stroke="#4AA44A" stroke-width="1"/><path d="M651.5 359.5 L651.5 374.5 L667.5 374.5" fill="none" stroke="#4AA44A" stroke-width="1"/><path d="M695.5 374.5 L762.5 374.5 L762.5 662.5 L644.5 662.5 L644.5 559.5 L784.5 559.5" fill="none" stroke="#4AA44A" stroke-width="1"/><path d="M577.5 448.5 L1102.5 448.5 L1102.5 485.5" fill="none" stroke="#4AA44A" stroke-width="1"/><path d="M1102.5 513.5 L1102.5 536.5 L1108.5 536.5" fill="none" stroke="#4AA44A" stroke-width="1"/><path d="M577.5 448.5 L577.5 514.5 L555.5 514.5" fill="none" stroke="#4AA44A" stroke-width="1"/><path d="M555.5 522.5 L584.5 522.5 L584.5 647.5 L614.5 647.5 L614.5 736.5 L599.5 736.5 L599.5 750.5" fill="none" stroke="#4AA44A" stroke-width="1"/><path d="M555.5 529.5 L577.5 529.5 L577.5 721.5 L592.5 721.5 L592.5 750.5" fill="none" stroke="#4AA44A" stroke-width="1"/><path d="M555.5 536.5 L570.5 536.5 L570.5 765.5 L584.5 765.5" fill="none" stroke="#4AA44A" stroke-width="1"/><path d="M555.5 544.5 L607.5 544.5 L607.5 514.5 L784.5 514.5" fill="none" stroke="#4AA44A" stroke-width="1"/><path d="M555.5 551.5 L614.5 551.5 L614.5 529.5 L784.5 529.5" fill="none" stroke="#4AA44A" stroke-width="1"/><path d="M555.5 573.5 L614.5 573.5 L614.5 559.5 L621.5 559.5 L621.5 536.5 L784.5 536.5" fill="none" stroke="#4AA44A" stroke-width="1"/><path d="M555.5 581.5 L629.5 581.5 L629.5 544.5 L784.5 544.5" fill="none" stroke="#4AA44A" stroke-width="1"/><path d="M555.5 588.5 L636.5 588.5 L636.5 551.5 L784.5 551.5" fill="none" stroke="#4AA44A" stroke-width="1"/><path d="M555.5 595.5 L644.5 595.5" fill="none" stroke="#4AA44A" stroke-width="1"/><path d="M555.5 603.5 L651.5 603.5" fill="none" stroke="#4AA44A" stroke-width="1"/><path d="M555.5 610.5 L658.5 610.5" fill="none" stroke="#4AA44A" stroke-width="1"/><path d="M592.5 418.5 L592.5 470.5" fill="none" stroke="#4AA44A" stroke-width="1"/><path d="M592.5 485.5 L592.5 492.5 L622.5 492.5" fill="none" stroke="#4AA44A" stroke-width="1"/><path d="M651.5 492.5 L784.5 492.5" fill="none" stroke="#4AA44A" stroke-width="1"/><path d="M740.5 499.5 L784.5 499.5" fill="none" stroke="#4AA44A" stroke-width="1"/><path d="M637.5 507.5 L645.5 507.5" fill="none" stroke="#4AA44A" stroke-width="1"/><path d="M673.5 507.5 L784.5 507.5" fill="none" stroke="#4AA44A" stroke-width="1"/><path d="M688.5 522.5 L784.5 522.5" fill="none" stroke="#4AA44A" stroke-width="1"/><path d="M688.5 603.5 L784.5 603.5" fill="none" stroke="#4AA44A" stroke-width="1"/><path d="M688.5 743.5 L1116.5 743.5 L1116.5 546.5" fill="none" stroke="#4AA44A" stroke-width="1"/><path d="M1116.5 455.5 L1161.5 455.5 L1161.5 464.5" fill="none" stroke="#4AA44A" stroke-width="1"/><path d="M1116.5 485.5 L1161.5 485.5 L1161.5 477.5" fill="none" stroke="#4AA44A" stroke-width="1"/><path d="M1116.5 485.5 L1116.5 522.5" fill="none" stroke="#4AA44A" stroke-width="1"/><path d="M607.5 765.5 L607.5 780.5" fill="none" stroke="#4AA44A" stroke-width="1"/><path d="M149.5 619.5 L149.5 595.5 L160.5 595.5" fill="none" stroke="#4AA44A" stroke-width="1"/><path d="M183.5 595.5 L193.5 595.5 L193.5 625.5 L215.5 625.5 L215.5 640.5 L208.5 640.5" fill="none" stroke="#4AA44A" stroke-width="1"/><path d="M156.5 618.5 L171.5 618.5 L171.5 647.5 L178.5 647.5 L178.5 654.5 L193.5 654.5" fill="none" stroke="#4AA44A" stroke-width="1"/><rect x="221.0" y="425.0" width="3" height="3" fill="#4AA44A"/><rect x="221.0" y="439.0" width="3" height="3" fill="#4AA44A"/><rect x="207.0" y="491.0" width="3" height="3" fill="#4AA44A"/><rect x="177.0" y="491.0" width="3" height="3" fill="#4AA44A"/><rect x="221.0" y="528.0" width="3" height="3" fill="#4AA44A"/><rect x="251.0" y="528.0" width="3" height="3" fill="#4AA44A"/><rect x="281.0" y="439.0" width="3" height="3" fill="#4AA44A"/><rect x="288.0" y="439.0" width="3" height="3" fill="#4AA44A"/><rect x="288.0" y="469.0" width="3" height="3" fill="#4AA44A"/><rect x="288.0" y="498.0" width="3" height="3" fill="#4AA44A"/><rect x="288.0" y="528.0" width="3" height="3" fill="#4AA44A"/><rect x="325.0" y="528.0" width="3" height="3" fill="#4AA44A"/><rect x="340.0" y="417.0" width="3" height="3" fill="#4AA44A"/><rect x="340.0" y="439.0" width="3" height="3" fill="#4AA44A"/><rect x="414.0" y="454.0" width="3" height="3" fill="#4AA44A"/><rect x="414.0" y="469.0" width="3" height="3" fill="#4AA44A"/><rect x="384.0" y="528.0" width="3" height="3" fill="#4AA44A"/><rect x="362.0" y="543.0" width="3" height="3" fill="#4AA44A"/><rect x="414.0" y="543.0" width="3" height="3" fill="#4AA44A"/><rect x="362.0" y="572.0" width="3" height="3" fill="#4AA44A"/><rect x="362.0" y="602.0" width="3" height="3" fill="#4AA44A"/><rect x="251.0" y="631.0" width="3" height="3" fill="#4AA44A"/><rect x="591.0" y="417.0" width="3" height="3" fill="#4AA44A"/><rect x="628.0" y="417.0" width="3" height="3" fill="#4AA44A"/><rect x="687.0" y="432.0" width="3" height="3" fill="#4AA44A"/><rect x="687.0" y="491.0" width="3" height="3" fill="#4AA44A"/><rect x="687.0" y="521.0" width="3" height="3" fill="#4AA44A"/><rect x="739.0" y="498.0" width="3" height="3" fill="#4AA44A"/><rect x="643.0" y="594.0" width="3" height="3" fill="#4AA44A"/><rect x="650.0" y="602.0" width="3" height="3" fill="#4AA44A"/><rect x="657.0" y="609.0" width="3" height="3" fill="#4AA44A"/><rect x="687.0" y="602.0" width="3" height="3" fill="#4AA44A"/><rect x="687.0" y="742.0" width="3" height="3" fill="#4AA44A"/><rect x="606.0" y="779.0" width="3" height="3" fill="#4AA44A"/><rect x="1115.0" y="454.0" width="3" height="3" fill="#4AA44A"/><rect x="1115.0" y="484.0" width="3" height="3" fill="#4AA44A"/><rect x="192.0" y="624.0" width="3" height="3" fill="#4AA44A"/><rect x="783.0" y="498.0" width="3" height="3" fill="#4AA44A"/><rect x="783.0" y="506.0" width="3" height="3" fill="#4AA44A"/><rect x="783.0" y="513.0" width="3" height="3" fill="#4AA44A"/><rect x="783.0" y="521.0" width="3" height="3" fill="#4AA44A"/><rect x="783.0" y="528.0" width="3" height="3" fill="#4AA44A"/><rect x="783.0" y="535.0" width="3" height="3" fill="#4AA44A"/><rect x="783.0" y="543.0" width="3" height="3" fill="#4AA44A"/><rect x="783.0" y="550.0" width="3" height="3" fill="#4AA44A"/><rect x="783.0" y="558.0" width="3" height="3" fill="#4AA44A"/><rect x="783.0" y="565.0" width="3" height="3" fill="#4AA44A"/><rect x="783.0" y="572.0" width="3" height="3" fill="#4AA44A"/><rect x="783.0" y="580.0" width="3" height="3" fill="#4AA44A"/><rect x="783.0" y="587.0" width="3" height="3" fill="#4AA44A"/><rect x="783.0" y="594.0" width="3" height="3" fill="#4AA44A"/><rect x="783.0" y="602.0" width="3" height="3" fill="#4AA44A"/><rect x="289.0" y="367.0" width="44.0" height="22.0" fill="none" stroke="#A54B4A" stroke-width="2"/><path d="M283.5 374.5 L289.5 374.5" fill="none" stroke="#A54B4A" stroke-width="1"/><path d="M333.5 374.5 L341.5 374.5" fill="none" stroke="#A54B4A" stroke-width="1"/><path d="M311.5 389.5 L311.5 396.5" fill="none" stroke="#A54B4A" stroke-width="1"/><path d="M309.5 374.5 L313.5 374.5" fill="none" stroke="#A54B4A" stroke-width="1"/><path d="M311.5 372.5 L311.5 376.5" fill="none" stroke="#A54B4A" stroke-width="1"/><text x="296" y="377" font-size="5.5" fill="#8A8A8A" text-anchor="start">VI</text><text x="317" y="377" font-size="5.5" fill="#8A8A8A" text-anchor="start">VO</text><text x="305" y="386" font-size="5.5" fill="#8A8A8A" text-anchor="start">GND</text><text x="286" y="372" font-size="5" fill="#8A8A8A" text-anchor="start">1</text><text x="335" y="372" font-size="5" fill="#8A8A8A" text-anchor="start">2</text><text x="306" y="394" font-size="5" fill="#8A8A8A" text-anchor="start">3</text><text x="289" y="358" font-size="6.5" fill="#8A8A8A" text-anchor="start">IC4</text><text x="289" y="365" font-size="6.5" fill="#8A8A8A" text-anchor="start">7805</text><rect x="230.0" y="433.0" width="44.0" height="22.0" fill="none" stroke="#A54B4A" stroke-width="2"/><path d="M222.5 440.5 L230.5 440.5" fill="none" stroke="#A54B4A" stroke-width="1"/><path d="M274.5 440.5 L282.5 440.5" fill="none" stroke="#A54B4A" stroke-width="1"/><path d="M252.5 455.5 L252.5 462.5" fill="none" stroke="#A54B4A" stroke-width="1"/><path d="M250.5 440.5 L254.5 440.5" fill="none" stroke="#A54B4A" stroke-width="1"/><path d="M252.5 438.5 L252.5 442.5" fill="none" stroke="#A54B4A" stroke-width="1"/><text x="237" y="443" font-size="5.5" fill="#8A8A8A" text-anchor="start">VI</text><text x="257" y="443" font-size="5.5" fill="#8A8A8A" text-anchor="start">VO</text><text x="247" y="452" font-size="5.5" fill="#8A8A8A" text-anchor="start">GND</text><text x="226" y="438" font-size="5" fill="#8A8A8A" text-anchor="start">1</text><text x="276" y="438" font-size="5" fill="#8A8A8A" text-anchor="start">2</text><text x="247" y="460" font-size="5" fill="#8A8A8A" text-anchor="start">3</text><text x="230" y="424" font-size="6.5" fill="#8A8A8A" text-anchor="start">IC5</text><text x="230" y="431" font-size="6.5" fill="#8A8A8A" text-anchor="start">7805</text><path d="M222.5 450.5 L222.5 470.5" fill="none" stroke="#A54B4A" stroke-width="1"/><rect x="217.5" y="455.5" width="11.0" height="3.0" fill="none" stroke="#A54B4A" stroke-width="1"/><rect x="217" y="460" width="12" height="3" fill="#A54B4A"/><text x="227" y="455" font-size="6.5" fill="#8A8A8A" text-anchor="start">C1</text><text x="227" y="470" font-size="6.5" fill="#8A8A8A" text-anchor="start">1000u/25V</text><path d="M193.5 477.5L208.5 492.5L193.5 507.5L178.5 492.5Z" fill="none" stroke="#A54B4A"/><g transform="rotate(-45 186 485)"><path d="M183.5 482V488L188.5 485Z M188.5 481.5V488.5" fill="none" stroke="#A54B4A"/></g><g transform="rotate(-135 201 485)"><path d="M198.5 482V488L203.5 485Z M203.5 481.5V488.5" fill="none" stroke="#A54B4A"/></g><g transform="rotate(-135 186 500)"><path d="M183.5 497V503L188.5 500Z M188.5 496.5V503.5" fill="none" stroke="#A54B4A"/></g><g transform="rotate(-45 201 500)"><path d="M198.5 497V503L203.5 500Z M203.5 496.5V503.5" fill="none" stroke="#A54B4A"/></g><path d="M191.5 492.5 L195.5 492.5" fill="none" stroke="#A54B4A" stroke-width="1"/><path d="M193.5 490.5 L193.5 494.5" fill="none" stroke="#A54B4A" stroke-width="1"/><text x="209" y="486" font-size="6.5" fill="#8A8A8A" text-anchor="start">B1</text><text x="209" y="507" font-size="6.5" fill="#8A8A8A" text-anchor="start">B2S08</text><rect x="152" y="491" width="5" height="4" fill="#A54B4A"/><rect x="152" y="498" width="5" height="4" fill="#A54B4A"/><path d="M157.5 492.5 L163.5 492.5" fill="none" stroke="#A54B4A" stroke-width="1"/><path d="M157.5 499.5 L163.5 499.5" fill="none" stroke="#A54B4A" stroke-width="1"/><text x="146" y="495" font-size="5" fill="#8A8A8A" text-anchor="start">2</text><text x="146" y="502" font-size="5" fill="#8A8A8A" text-anchor="start">1</text><text x="146" y="511" font-size="7" fill="#8A8A8A" text-anchor="start">X1</text><path d="M289.5 440.5 L289.5 529.5" fill="none" stroke="#A54B4A" stroke-width="1"/><rect x="286.5" y="448.5" width="6.0" height="15.0" fill="#fff" stroke="#A54B4A" stroke-width="1"/><path d="M287.5 455.5 L291.5 455.5" fill="none" stroke="#A54B4A" stroke-width="1"/><path d="M289.5 453.5 L289.5 457.5" fill="none" stroke="#A54B4A" stroke-width="1"/><rect x="286.5" y="477.5" width="6.0" height="15.0" fill="#fff" stroke="#A54B4A" stroke-width="1"/><path d="M287.5 484.5 L291.5 484.5" fill="none" stroke="#A54B4A" stroke-width="1"/><path d="M289.5 482.5 L289.5 486.5" fill="none" stroke="#A54B4A" stroke-width="1"/><rect x="286.5" y="507.5" width="6.0" height="15.0" fill="#fff" stroke="#A54B4A" stroke-width="1"/><path d="M287.5 514.5 L291.5 514.5" fill="none" stroke="#A54B4A" stroke-width="1"/><path d="M289.5 512.5 L289.5 516.5" fill="none" stroke="#A54B4A" stroke-width="1"/><text x="284" y="455" font-size="6" fill="#8A8A8A" text-anchor="start" transform="rotate(-90 284 455)">2K2</text><text x="300" y="453" font-size="6" fill="#8A8A8A" text-anchor="start" transform="rotate(-90 300 453)">R1</text><text x="284" y="495" font-size="6" fill="#8A8A8A" text-anchor="start" transform="rotate(-90 284 495)">R3</text><text x="300" y="495" font-size="6" fill="#8A8A8A" text-anchor="start" transform="rotate(-90 300 495)">10K</text><text x="284" y="523" font-size="6" fill="#8A8A8A" text-anchor="start" transform="rotate(-90 284 523)">R2</text><text x="300" y="522" font-size="6" fill="#8A8A8A" text-anchor="start" transform="rotate(-90 300 522)">10K</text><rect x="295" y="528" width="3" height="3" fill="#A54B4A"/><rect x="310" y="528" width="3" height="3" fill="#A54B4A"/><path d="M298.5 528.5L300.5 525.5H307.5L310 528.5" fill="none" stroke="#A54B4A"/><path d="M304.5 528.5 L304.5 531.5" fill="none" stroke="#A54B4A" stroke-width="1"/><path d="M289.5 529.5 L295.5 529.5" fill="none" stroke="#2F7A2F" stroke-width="1"/><path d="M313.5 529.5 L319.5 529.5" fill="none" stroke="#2F7A2F" stroke-width="1"/><text x="300" y="523" font-size="6" fill="#8A8A8A" text-anchor="start">J7</text><text x="293" y="526" font-size="5" fill="#8A8A8A" text-anchor="start">1</text><text x="312" y="527" font-size="5" fill="#8A8A8A" text-anchor="start">2</text><text x="296" y="536.5" font-size="6" fill="#8A8A8A" text-anchor="start">J7MM</text><rect x="313.5" y="555.5" width="9.0" height="15.0" fill="none" stroke="#A54B4A" stroke-width="1"/><circle cx="318" cy="559.5" r="2" fill="#A54B4A"/><circle cx="318" cy="566.5" r="2" fill="none" stroke="#A54B4A"/><rect x="328.5" y="555.5" width="9.0" height="15.0" fill="none" stroke="#A54B4A" stroke-width="1"/><circle cx="333" cy="559.5" r="2" fill="#A54B4A"/><circle cx="333" cy="566.5" r="2" fill="none" stroke="#A54B4A"/><path d="M311.5 559.5 L313.5 559.5" fill="none" stroke="#A54B4A" stroke-width="1"/><path d="M311.5 566.5 L313.5 566.5" fill="none" stroke="#A54B4A" stroke-width="1"/><path d="M326.5 559.5 L328.5 559.5" fill="none" stroke="#A54B4A" stroke-width="1"/><path d="M326.5 566.5 L328.5 566.5" fill="none" stroke="#A54B4A" stroke-width="1"/><text x="322" y="573" font-size="6" fill="#8A8A8A" text-anchor="start" transform="rotate(90 322 573)">J3</text><text x="337" y="573" font-size="6" fill="#8A8A8A" text-anchor="start" transform="rotate(90 337 573)">J2</text><path d="M363.5 544.5 L363.5 632.5" fill="none" stroke="#A54B4A" stroke-width="1"/><rect x="360.5" y="551.5" width="5.0" height="15.0" fill="#fff" stroke="#A54B4A" stroke-width="1"/><path d="M361.5 558.5 L365.5 558.5" fill="none" stroke="#A54B4A" stroke-width="1"/><path d="M363.5 556.5 L363.5 560.5" fill="none" stroke="#A54B4A" stroke-width="1"/><rect x="360.5" y="581.5" width="5.0" height="14.0" fill="#fff" stroke="#A54B4A" stroke-width="1"/><path d="M361.5 588.5 L365.5 588.5" fill="none" stroke="#A54B4A" stroke-width="1"/><path d="M363.5 586.5 L363.5 590.5" fill="none" stroke="#A54B4A" stroke-width="1"/><rect x="360.5" y="610.5" width="5.0" height="15.0" fill="#fff" stroke="#A54B4A" stroke-width="1"/><path d="M361.5 617.5 L365.5 617.5" fill="none" stroke="#A54B4A" stroke-width="1"/><path d="M363.5 615.5 L363.5 619.5" fill="none" stroke="#A54B4A" stroke-width="1"/><text x="358" y="561" font-size="6" fill="#8A8A8A" text-anchor="start" transform="rotate(-90 358 561)">2K2</text><text x="373" y="556" font-size="6" fill="#8A8A8A" text-anchor="start" transform="rotate(-90 373 556)">R8</text><text x="358" y="598" font-size="6" fill="#8A8A8A" text-anchor="start" transform="rotate(-90 358 598)">R7</text><text x="373" y="598" font-size="6" fill="#8A8A8A" text-anchor="start" transform="rotate(-90 373 598)">10K</text><text x="358" y="628" font-size="6" fill="#8A8A8A" text-anchor="start" transform="rotate(-90 358 628)">R6</text><text x="373" y="628" font-size="6" fill="#8A8A8A" text-anchor="start" transform="rotate(-90 373 628)">10K</text><rect x="429.5" y="433.5" width="111.0" height="185.0" fill="none" stroke="#A54B4A" stroke-width="1"/><path d="M415.5 455.5 L429.5 455.5" fill="none" stroke="#A54B4A" stroke-width="1"/><path d="M415.5 463.5 L429.5 463.5" fill="none" stroke="#A54B4A" stroke-width="1"/><path d="M415.5 470.5 L429.5 470.5" fill="none" stroke="#A54B4A" stroke-width="1"/><path d="M415.5 492.5 L429.5 492.5" fill="none" stroke="#A54B4A" stroke-width="1"/><path d="M415.5 507.5 L429.5 507.5" fill="none" stroke="#A54B4A" stroke-width="1"/><path d="M415.5 529.5 L429.5 529.5" fill="none" stroke="#A54B4A" stroke-width="1"/><path d="M415.5 544.5 L429.5 544.5" fill="none" stroke="#A54B4A" stroke-width="1"/><path d="M415.5 440.5 L423.5 440.5" fill="none" stroke="#A54B4A" stroke-width="1"/><circle cx="426.5" cy="440.5" r="3" fill="none" stroke="#A54B4A" stroke-width="1"/><path d="M540.5 440.5 L555.5 440.5" fill="none" stroke="#A54B4A" stroke-width="1"/><path d="M540.5 448.5 L555.5 448.5" fill="none" stroke="#A54B4A" stroke-width="1"/><path d="M540.5 455.5 L555.5 455.5" fill="none" stroke="#A54B4A" stroke-width="1"/><path d="M540.5 463.5 L555.5 463.5" fill="none" stroke="#A54B4A" stroke-width="1"/><path d="M540.5 470.5 L555.5 470.5" fill="none" stroke="#A54B4A" stroke-width="1"/><path d="M540.5 477.5 L555.5 477.5" fill="none" stroke="#A54B4A" stroke-width="1"/><path d="M540.5 507.5 L555.5 507.5" fill="none" stroke="#A54B4A" stroke-width="1"/><path d="M540.5 514.5 L555.5 514.5" fill="none" stroke="#A54B4A" stroke-width="1"/><path d="M540.5 522.5 L555.5 522.5" fill="none" stroke="#A54B4A" stroke-width="1"/><path d="M540.5 529.5 L555.5 529.5" fill="none" stroke="#A54B4A" stroke-width="1"/><path d="M540.5 536.5 L555.5 536.5" fill="none" stroke="#A54B4A" stroke-width="1"/><path d="M540.5 544.5 L555.5 544.5" fill="none" stroke="#A54B4A" stroke-width="1"/><path d="M540.5 551.5 L555.5 551.5" fill="none" stroke="#A54B4A" stroke-width="1"/><path d="M540.5 559.5 L555.5 559.5" fill="none" stroke="#A54B4A" stroke-width="1"/><path d="M540.5 573.5 L555.5 573.5" fill="none" stroke="#A54B4A" stroke-width="1"/><path d="M540.5 581.5 L555.5 581.5" fill="none" stroke="#A54B4A" stroke-width="1"/><path d="M540.5 588.5 L555.5 588.5" fill="none" stroke="#A54B4A" stroke-width="1"/><path d="M540.5 595.5 L555.5 595.5" fill="none" stroke="#A54B4A" stroke-width="1"/><path d="M540.5 603.5 L555.5 603.5" fill="none" stroke="#A54B4A" stroke-width="1"/><path d="M540.5 610.5 L555.5 610.5" fill="none" stroke="#A54B4A" stroke-width="1"/><path d="M479.5 522.5 L483.5 522.5" fill="none" stroke="#A54B4A" stroke-width="1"/><path d="M481.5 520.5 L481.5 524.5" fill="none" stroke="#A54B4A" stroke-width="1"/><text x="429" y="429" font-size="6.5" fill="#8A8A8A" text-anchor="start">MEGA8-P</text><text x="430" y="626" font-size="7" fill="#8A8A8A" text-anchor="start">IC3</text><text x="436" y="442.5" font-size="5.3" fill="#8A8A8A" text-anchor="start" letter-spacing="0.35">PC6(RESET)</text><text x="436" y="457.5" font-size="5.3" fill="#8A8A8A" text-anchor="start" letter-spacing="0.35">GND</text><text x="436" y="465.5" font-size="5.3" fill="#8A8A8A" text-anchor="start" letter-spacing="0.35">AREF</text><text x="436" y="472.5" font-size="5.3" fill="#8A8A8A" text-anchor="start" letter-spacing="0.35">AVCC</text><text x="436" y="494.5" font-size="5.3" fill="#8A8A8A" text-anchor="start" letter-spacing="0.35">PB6(XTAL1/OSC1)</text><text x="436" y="509.5" font-size="5.3" fill="#8A8A8A" text-anchor="start" letter-spacing="0.35">PB7(XTAL2/OSC2)</text><text x="436" y="531.5" font-size="5.3" fill="#8A8A8A" text-anchor="start" letter-spacing="0.35">GND</text><text x="436" y="546.5" font-size="5.3" fill="#8A8A8A" text-anchor="start" letter-spacing="0.35">VCC</text><text x="533.3" y="442.5" font-size="5.3" fill="#8A8A8A" text-anchor="end" letter-spacing="0.35">PC0(ADC0)</text><text x="533.3" y="450.5" font-size="5.3" fill="#8A8A8A" text-anchor="end" letter-spacing="0.35">PC1(ADC1)</text><text x="533.3" y="457.5" font-size="5.3" fill="#8A8A8A" text-anchor="end" letter-spacing="0.35">PC2(ADC2)</text><text x="533.3" y="465.5" font-size="5.3" fill="#8A8A8A" text-anchor="end" letter-spacing="0.35">PC3(ADC3)</text><text x="533.3" y="472.5" font-size="5.3" fill="#8A8A8A" text-anchor="end" letter-spacing="0.35">PC4(ADC4/SDA)</text><text x="533.3" y="479.5" font-size="5.3" fill="#8A8A8A" text-anchor="end" letter-spacing="0.35">PC5(ADC5/SCL)</text><text x="533.3" y="509.5" font-size="5.3" fill="#8A8A8A" text-anchor="end" letter-spacing="0.35">PD0(RXD)</text><text x="533.3" y="516.5" font-size="5.3" fill="#8A8A8A" text-anchor="end" letter-spacing="0.35">PD1(TXD)</text><text x="533.3" y="524.5" font-size="5.3" fill="#8A8A8A" text-anchor="end" letter-spacing="0.35">PD2(INT0)</text><text x="533.3" y="531.5" font-size="5.3" fill="#8A8A8A" text-anchor="end" letter-spacing="0.35">PD3(INT1)</text><text x="533.3" y="538.5" font-size="5.3" fill="#8A8A8A" text-anchor="end" letter-spacing="0.35">PD4(XCK/T0)</text><text x="533.3" y="546.5" font-size="5.3" fill="#8A8A8A" text-anchor="end" letter-spacing="0.35">PD5(T1)</text><text x="533.3" y="553.5" font-size="5.3" fill="#8A8A8A" text-anchor="end" letter-spacing="0.35">PD6(AIN0)</text><text x="533.3" y="561.5" font-size="5.3" fill="#8A8A8A" text-anchor="end" letter-spacing="0.35">PD7(AIN1)</text><text x="533.3" y="575.5" font-size="5.3" fill="#8A8A8A" text-anchor="end" letter-spacing="0.35">PB0(ICP)</text><text x="533.3" y="583.5" font-size="5.3" fill="#8A8A8A" text-anchor="end" letter-spacing="0.35">PB1(OC1A)</text><text x="533.3" y="590.5" font-size="5.3" fill="#8A8A8A" text-anchor="end" letter-spacing="0.35">PB2(SS/OC1B)</text><text x="533.3" y="597.5" font-size="5.3" fill="#8A8A8A" text-anchor="end" letter-spacing="0.35">PB3(MOSI/OC2)</text><text x="533.3" y="605.5" font-size="5.3" fill="#8A8A8A" text-anchor="end" letter-spacing="0.35">PB4(MISO)</text><text x="533.3" y="612.5" font-size="5.3" fill="#8A8A8A" text-anchor="end" letter-spacing="0.35">PB5(SCK)</text><text x="422.5" y="439" font-size="5.2" fill="#8A8A8A" text-anchor="end">1</text><text x="422.5" y="454" font-size="5.2" fill="#8A8A8A" text-anchor="end">22</text><text x="422.5" y="462" font-size="5.2" fill="#8A8A8A" text-anchor="end">21</text><text x="422.5" y="469" font-size="5.2" fill="#8A8A8A" text-anchor="end">20</text><text x="422.5" y="491" font-size="5.2" fill="#8A8A8A" text-anchor="end">9</text><text x="422.5" y="506" font-size="5.2" fill="#8A8A8A" text-anchor="end">10</text><text x="422.5" y="528" font-size="5.2" fill="#8A8A8A" text-anchor="end">8</text><text x="422.5" y="543" font-size="5.2" fill="#8A8A8A" text-anchor="end">7</text><text x="547" y="439" font-size="5.2" fill="#8A8A8A" text-anchor="start">23</text><text x="547" y="447" font-size="5.2" fill="#8A8A8A" text-anchor="start">24</text><text x="547" y="454" font-size="5.2" fill="#8A8A8A" text-anchor="start">25</text><text x="547" y="462" font-size="5.2" fill="#8A8A8A" text-anchor="start">26</text><text x="547" y="469" font-size="5.2" fill="#8A8A8A" text-anchor="start">27</text><text x="547" y="476" font-size="5.2" fill="#8A8A8A" text-anchor="start">28</text><text x="547" y="506" font-size="5.2" fill="#8A8A8A" text-anchor="start">2</text><text x="547" y="513" font-size="5.2" fill="#8A8A8A" text-anchor="start">3</text><text x="547" y="521" font-size="5.2" fill="#8A8A8A" text-anchor="start">4</text><text x="547" y="528" font-size="5.2" fill="#8A8A8A" text-anchor="start">5</text><text x="547" y="535" font-size="5.2" fill="#8A8A8A" text-anchor="start">6</text><text x="547" y="543" font-size="5.2" fill="#8A8A8A" text-anchor="start">11</text><text x="547" y="550" font-size="5.2" fill="#8A8A8A" text-anchor="start">12</text><text x="547" y="558" font-size="5.2" fill="#8A8A8A" text-anchor="start">13</text><text x="547" y="572" font-size="5.2" fill="#8A8A8A" text-anchor="start">14</text><text x="547" y="580" font-size="5.2" fill="#8A8A8A" text-anchor="start">15</text><text x="547" y="587" font-size="5.2" fill="#8A8A8A" text-anchor="start">16</text><text x="547" y="594" font-size="5.2" fill="#8A8A8A" text-anchor="start">17</text><text x="547" y="602" font-size="5.2" fill="#8A8A8A" text-anchor="start">18</text><text x="547" y="609" font-size="5.2" fill="#8A8A8A" text-anchor="start">19</text><rect x="607.0" y="348.0" width="51.0" height="22.0" fill="none" stroke="#A54B4A" stroke-width="2"/><circle cx="614" cy="355.4" r="3" fill="none" stroke="#A54B4A" stroke-width="1"/><circle cx="621.6" cy="355.4" r="3" fill="none" stroke="#A54B4A" stroke-width="1"/><circle cx="629.3" cy="355.4" r="3" fill="none" stroke="#A54B4A" stroke-width="1"/><circle cx="636.5" cy="355.4" r="3" fill="none" stroke="#A54B4A" stroke-width="1"/><circle cx="644.2" cy="355.4" r="3" fill="none" stroke="#A54B4A" stroke-width="1"/><circle cx="651.6" cy="355.4" r="3" fill="none" stroke="#A54B4A" stroke-width="1"/><text x="604" y="369" font-size="7" fill="#8A8A8A" text-anchor="start" transform="rotate(-90 604 369)">JP6</text><text x="615" y="362" font-size="5" fill="#8A8A8A" text-anchor="end" transform="rotate(-90 615 362)">1</text><text x="622.6" y="362" font-size="5" fill="#8A8A8A" text-anchor="end" transform="rotate(-90 622.6 362)">2</text><text x="630.3" y="362" font-size="5" fill="#8A8A8A" text-anchor="end" transform="rotate(-90 630.3 362)">3</text><text x="637.5" y="362" font-size="5" fill="#8A8A8A" text-anchor="end" transform="rotate(-90 637.5 362)">4</text><text x="645.2" y="362" font-size="5" fill="#8A8A8A" text-anchor="end" transform="rotate(-90 645.2 362)">5</text><text x="652.6" y="362" font-size="5" fill="#8A8A8A" text-anchor="end" transform="rotate(-90 652.6 362)">6</text><path d="M621.5 374.5 L621.5 404.5" fill="none" stroke="#A54B4A" stroke-width="1"/><path d="M620 379.5L624.5 382L620 384.5Z M620 394L624.5 396.5L620 399Z" fill="#A54B4A" stroke="#A54B4A" stroke-width="0.8"/><path d="M621.5 383.5L618.5 387.5V392.5L621.5 395.5" fill="none" stroke="#A54B4A"/><path d="M622.5 389.5 L626.5 389.5" fill="none" stroke="#A54B4A" stroke-width="1"/><path d="M624.5 387.5 L624.5 391.5" fill="none" stroke="#A54B4A" stroke-width="1"/><text x="617" y="392" font-size="6.5" fill="#8A8A8A" text-anchor="start" transform="rotate(-90 617 392)">J8</text><path d="M667.5 374.5 L673.5 374.5" fill="none" stroke="#A54B4A" stroke-width="1"/><path d="M688.5 374.5 L695.5 374.5" fill="none" stroke="#A54B4A" stroke-width="1"/><rect x="671.5" y="372.5" width="4.0" height="4.0" fill="#A54B4A"/><rect x="686.5" y="372.5" width="4.0" height="4.0" fill="#A54B4A"/><path d="M675.5 374.5L678.5 370.5H684.5L687.5 374.5" fill="none" stroke="#A54B4A"/><path d="M679.5 375.5 L683.5 375.5" fill="none" stroke="#A54B4A" stroke-width="1"/><path d="M681.5 373.5 L681.5 377.5" fill="none" stroke="#A54B4A" stroke-width="1"/><text x="674" y="367" font-size="6.5" fill="#8A8A8A" text-anchor="start">J4</text><path d="M689.5 381.5 L695.5 381.5" fill="none" stroke="#A54B4A" stroke-width="1"/><path d="M710.5 381.5 L717.5 381.5" fill="none" stroke="#A54B4A" stroke-width="1"/><rect x="693.5" y="379.5" width="4.0" height="4.0" fill="#A54B4A"/><rect x="708.5" y="379.5" width="4.0" height="4.0" fill="#A54B4A"/><path d="M697.5 381.5L700.5 377.5H706.5L709.5 381.5" fill="none" stroke="#A54B4A"/><path d="M701.5 382.5 L705.5 382.5" fill="none" stroke="#A54B4A" stroke-width="1"/><path d="M703.5 380.5 L703.5 384.5" fill="none" stroke="#A54B4A" stroke-width="1"/><text x="696" y="374" font-size="6.5" fill="#8A8A8A" text-anchor="start">J5</text><path d="M673.5 396.5 L681.5 396.5" fill="none" stroke="#A54B4A" stroke-width="1"/><path d="M695.5 396.5 L703.5 396.5" fill="none" stroke="#A54B4A" stroke-width="1"/><rect x="679.5" y="394.5" width="4.0" height="4.0" fill="#A54B4A"/><rect x="693.5" y="394.5" width="4.0" height="4.0" fill="#A54B4A"/><path d="M683.5 396.5L686.5 392.5H691.5L694.5 396.5" fill="none" stroke="#A54B4A"/><path d="M687.5 397.5 L691.5 397.5" fill="none" stroke="#A54B4A" stroke-width="1"/><path d="M689.5 395.5 L689.5 399.5" fill="none" stroke="#A54B4A" stroke-width="1"/><text x="682" y="389" font-size="6.5" fill="#8A8A8A" text-anchor="start">J6</text><path d="M658.5 426.5 L680.5 426.5" fill="none" stroke="#A54B4A" stroke-width="1"/><rect x="667" y="420" width="6" height="13" fill="#A54B4A"/><text x="664" y="445" font-size="6" fill="#8A8A8A" text-anchor="start" transform="rotate(-90 664 445)">100n</text><text x="676" y="440" font-size="6" fill="#8A8A8A" text-anchor="start" transform="rotate(-90 676 440)">C2</text><path d="M592.5 470.5 L592.5 485.5" fill="none" stroke="#A54B4A" stroke-width="1"/><rect x="589.5" y="470.5" width="5.0" height="15.0" fill="#fff" stroke="#A54B4A" stroke-width="1"/><path d="M590.5 478.5 L594.5 478.5" fill="none" stroke="#A54B4A" stroke-width="1"/><path d="M592.5 476.5 L592.5 480.5" fill="none" stroke="#A54B4A" stroke-width="1"/><text x="587" y="487" font-size="6" fill="#8A8A8A" text-anchor="start" transform="rotate(-90 587 487)">R4</text><path d="M622.5 492.5 L651.5 492.5" fill="none" stroke="#A54B4A" stroke-width="1"/><rect x="629.5" y="490.5" width="15.0" height="4.0" fill="#fff" stroke="#A54B4A" stroke-width="1"/><path d="M637.5 494.5 L637.5 507.5" fill="none" stroke="#A54B4A" stroke-width="1"/><path d="M641 495L645 487" stroke="#A54B4A" fill="none"/><path d="M627 484.5H634M632 482.5L634.5 484.5L632 486.5" stroke="#A54B4A" fill="none"/><text x="626" y="474" font-size="6.5" fill="#8A8A8A" text-anchor="start">R5</text><text x="626" y="481" font-size="6.5" fill="#8A8A8A" text-anchor="start">2,5k</text><path d="M645.5 507.5 L651.5 507.5" fill="none" stroke="#A54B4A" stroke-width="1"/><path d="M666.5 507.5 L673.5 507.5" fill="none" stroke="#A54B4A" stroke-width="1"/><rect x="649.5" y="505.5" width="4.0" height="4.0" fill="#A54B4A"/><rect x="664.5" y="505.5" width="4.0" height="4.0" fill="#A54B4A"/><path d="M653.5 507.5L656.5 503.5H662.5L665.5 507.5" fill="none" stroke="#A54B4A"/><path d="M657.5 508.5 L661.5 508.5" fill="none" stroke="#A54B4A" stroke-width="1"/><path d="M659.5 506.5 L659.5 510.5" fill="none" stroke="#A54B4A" stroke-width="1"/><text x="652" y="500" font-size="6.5" fill="#8A8A8A" text-anchor="start">J9</text><rect x="773.0" y="485.0" width="22.0" height="124.0" fill="none" stroke="#A54B4A" stroke-width="2"/><circle cx="788.5" cy="492.5" r="3.2" fill="none" stroke="#A54B4A" stroke-width="1"/><circle cx="788.5" cy="499.9" r="3.2" fill="none" stroke="#A54B4A" stroke-width="1"/><circle cx="788.5" cy="507.8" r="3.2" fill="none" stroke="#A54B4A" stroke-width="1"/><circle cx="788.5" cy="514.7" r="3.2" fill="none" stroke="#A54B4A" stroke-width="1"/><circle cx="788.5" cy="522.9" r="3.2" fill="none" stroke="#A54B4A" stroke-width="1"/><circle cx="788.5" cy="529.7" r="3.2" fill="none" stroke="#A54B4A" stroke-width="1"/><circle cx="788.5" cy="536.9" r="3.2" fill="none" stroke="#A54B4A" stroke-width="1"/><circle cx="788.5" cy="544.9" r="3.2" fill="none" stroke="#A54B4A" stroke-width="1"/><circle cx="788.5" cy="552.0" r="3.2" fill="none" stroke="#A54B4A" stroke-width="1"/><circle cx="788.5" cy="559.9" r="3.2" fill="none" stroke="#A54B4A" stroke-width="1"/><circle cx="788.5" cy="567.0" r="3.2" fill="none" stroke="#A54B4A" stroke-width="1"/><circle cx="788.5" cy="573.8" r="3.2" fill="none" stroke="#A54B4A" stroke-width="1"/><circle cx="788.5" cy="581.8" r="3.2" fill="none" stroke="#A54B4A" stroke-width="1"/><circle cx="788.5" cy="588.8" r="3.2" fill="none" stroke="#A54B4A" stroke-width="1"/><circle cx="788.5" cy="595.9" r="3.2" fill="none" stroke="#A54B4A" stroke-width="1"/><circle cx="788.5" cy="604.0" r="3.2" fill="none" stroke="#A54B4A" stroke-width="1"/><text x="773" y="482" font-size="7" fill="#8A8A8A" text-anchor="start">J P 1</text><text x="784" y="490" font-size="5" fill="#8A8A8A" text-anchor="end" transform="rotate(-90 784 490)">1</text><text x="784" y="497.4" font-size="5" fill="#8A8A8A" text-anchor="end" transform="rotate(-90 784 497.4)">2</text><text x="784" y="505.3" font-size="5" fill="#8A8A8A" text-anchor="end" transform="rotate(-90 784 505.3)">3</text><text x="784" y="512.2" font-size="5" fill="#8A8A8A" text-anchor="end" transform="rotate(-90 784 512.2)">4</text><text x="784" y="520.4" font-size="5" fill="#8A8A8A" text-anchor="end" transform="rotate(-90 784 520.4)">5</text><text x="784" y="527.2" font-size="5" fill="#8A8A8A" text-anchor="end" transform="rotate(-90 784 527.2)">6</text><text x="784" y="534.4" font-size="5" fill="#8A8A8A" text-anchor="end" transform="rotate(-90 784 534.4)">7</text><text x="784" y="542.4" font-size="5" fill="#8A8A8A" text-anchor="end" transform="rotate(-90 784 542.4)">8</text><text x="784" y="549.5" font-size="5" fill="#8A8A8A" text-anchor="end" transform="rotate(-90 784 549.5)">9</text><text x="784" y="557.4" font-size="5" fill="#8A8A8A" text-anchor="end" transform="rotate(-90 784 557.4)">10</text><text x="784" y="564.5" font-size="5" fill="#8A8A8A" text-anchor="end" transform="rotate(-90 784 564.5)">11</text><text x="784" y="571.3" font-size="5" fill="#8A8A8A" text-anchor="end" transform="rotate(-90 784 571.3)">12</text><text x="784" y="579.3" font-size="5" fill="#8A8A8A" text-anchor="end" transform="rotate(-90 784 579.3)">13</text><text x="784" y="586.3" font-size="5" fill="#8A8A8A" text-anchor="end" transform="rotate(-90 784 586.3)">14</text><text x="784" y="593.4" font-size="5" fill="#8A8A8A" text-anchor="end" transform="rotate(-90 784 593.4)">15</text><text x="784" y="601.5" font-size="5" fill="#8A8A8A" text-anchor="end" transform="rotate(-90 784 601.5)">16</text><rect x="582" y="755" width="27" height="4" fill="#A54B4A"/><path d="M584.5 749.5 L584.5 765.5" fill="none" stroke="#A54B4A" stroke-width="1"/><path d="M592.5 749.5 L592.5 765.5" fill="none" stroke="#A54B4A" stroke-width="1"/><path d="M599.5 749.5 L599.5 765.5" fill="none" stroke="#A54B4A" stroke-width="1"/><path d="M607.5 749.5 L607.5 765.5" fill="none" stroke="#A54B4A" stroke-width="1"/><text x="582" y="758" font-size="6.5" fill="#8A8A8A" text-anchor="start" transform="rotate(-90 582 758)">JP7</text><path d="M1116.5 455.5 L1116.5 464.5" fill="none" stroke="#A54B4A" stroke-width="1"/><path d="M1116.5 475.5 L1116.5 485.5" fill="none" stroke="#A54B4A" stroke-width="1"/><rect x="1105.5" y="464.5" width="22.0" height="11.0" fill="none" stroke="#A54B4A" stroke-width="1"/><path d="M1111 475L1121 465" stroke="#A54B4A"/><text x="1121" y="453" font-size="6.5" fill="#8A8A8A" text-anchor="start">K1</text><text x="1121" y="460" font-size="6.5" fill="#8A8A8A" text-anchor="start">4052</text><path d="M1161.5 464.5 L1161.5 477.5" fill="none" stroke="#A54B4A" stroke-width="1"/><path d="M1157 466.5H1166M1157.5 474.5H1165.5L1161.5 467Z" fill="none" stroke="#A54B4A"/><text x="1159" y="462" font-size="6" fill="#8A8A8A" text-anchor="start" transform="rotate(-90 1159 462)">D1</text><text x="1167" y="461" font-size="6" fill="#8A8A8A" text-anchor="start" transform="rotate(-90 1167 461)">1N4445</text><path d="M1102.5 485.5 L1102.5 513.5" fill="none" stroke="#A54B4A" stroke-width="1"/><rect x="1100.5" y="490.5" width="4.0" height="4.0" fill="#A54B4A"/><rect x="1100.5" y="505.5" width="4.0" height="4.0" fill="#A54B4A"/><path d="M1102.5 494.5L1099.5 497.5V503.5L1102.5 506.5" fill="none" stroke="#A54B4A"/><path d="M1101.5 500.5 L1105.5 500.5" fill="none" stroke="#A54B4A" stroke-width="1"/><path d="M1103.5 498.5 L1103.5 502.5" fill="none" stroke="#A54B4A" stroke-width="1"/><text x="1096" y="508" font-size="6.5" fill="#8A8A8A" text-anchor="start" transform="rotate(-90 1096 508)">J1</text><path d="M1108.5 536.5 L1110.5 536.5" fill="none" stroke="#A54B4A" stroke-width="1"/><rect x="1108" y="529" width="3" height="15" fill="#A54B4A"/><path d="M1110.5 533.5L1116.5 528.5V522M1110.5 538.5L1116.5 544.5V552" fill="none" stroke="#A54B4A"/><text x="1124" y="530" font-size="6.5" fill="#8A8A8A" text-anchor="start">Q1</text><text x="1125" y="537" font-size="6.5" fill="#8A8A8A" text-anchor="start">BD139</text><path d="M155.5 595.5 L189.5 595.5" fill="none" stroke="#A54B4A" stroke-width="1"/><rect x="160.5" y="593.5" width="22.0" height="5.0" fill="#fff" stroke="#A54B4A" stroke-width="1"/><path d="M171.5 593.5 L171.5 598.5" fill="none" stroke="#A54B4A" stroke-width="1"/><text x="161" y="588" font-size="6.5" fill="#8A8A8A" text-anchor="start">F1</text><rect x="145.5" y="619.5" width="15.0" height="10.0" fill="none" stroke="#A54B4A" stroke-width="1"/><circle cx="149.5" cy="625" r="2.2" fill="#A54B4A"/><rect x="154.5" y="622.5" width="4" height="5" fill="#A54B4A"/><text x="130" y="629" font-size="6.5" fill="#8A8A8A" text-anchor="start">J38</text><path d="M193.5 625.5 L193.5 633.5" fill="none" stroke="#A54B4A" stroke-width="1"/><path d="M193 634L205 640M202 638L206 641L202 642" fill="none" stroke="#A54B4A"/><path d="M206.5 640.5 L215.5 640.5" fill="none" stroke="#A54B4A" stroke-width="1"/><path d="M193.5 644.5 L193.5 654.5" fill="none" stroke="#A54B4A" stroke-width="1"/><text x="192" y="633" font-size="5.5" fill="#8A8A8A" text-anchor="start" transform="rotate(-90 192 633)">S1</text><text x="207" y="631" font-size="6" fill="#8A8A8A" text-anchor="start" transform="rotate(-90 207 631)">K1</text><text x="208" y="638" font-size="6" fill="#8A8A8A" text-anchor="start">P1</text><text x="192" y="653" font-size="5.5" fill="#8A8A8A" text-anchor="start" transform="rotate(-90 192 653)">S1</text></g></svg>
<div class="a" style="left:0;top:990px;width:1280px;height:34px;background:linear-gradient(#8FA570 0px,#8FA570 1px,#E0ECC0 1px,#C5D3A2 3px,#A9B880 5px,#ABBA83 12px,#B7C58F 22px,#C0CC98 30px,#A7B47E 33px)"></div><div class="a" style="left:0;top:990px;width:114px;height:34px;border-radius:0 14px 14px 0/0 20px 20px 0;background:linear-gradient(#3A6A2A 0px,#3A6A2A 1px,#9DBB7E 1px,#D8E8B0 3px,#E0ECBA 6px,#B8C894 9px,#96AA74 14px,#85A065 20px,#4F7F42 27px,#5A8A4E 30px,#6A9A5E 34px);box-shadow:inset -1px 0 0 #44703A,inset -3px 0 3px #6E9A5E"></div><svg class="a" style="left:10px;top:996px" width="24" height="24" viewBox="0 0 24 24"><path d="M3 3Q7 1 11 3V10Q7 8 3 10Z" fill="#F25022"/><path d="M12 3Q16 5 21 3V10Q16 12 12 10Z" fill="#7FBA00"/><path d="M2 11Q6 9 10 11V19Q6 17 2 19Z" fill="#00A4EF"/><path d="M11 11Q16 13 20 11V19Q16 21 11 19Z" fill="#FFB900"/></svg><div class="a" style="left:41px;top:993px;font:italic bold 21px 'Liberation Sans',sans-serif;color:#fff;text-shadow:1px 1px 1px #3A5A2A">Start</div><svg class="a" style="left:127px;top:997px" width="20" height="20" viewBox="0 0 20 20"><rect x="1" y="2" width="16" height="15" rx="2" fill="#5EA0F0" stroke="#2A5FB0"/><path d="M5 6H11V13H5Z" fill="#fff"/><path d="M8 8h6" stroke="#E33" stroke-width="2"/></svg><svg class="a" style="left:154px;top:997px" width="20" height="20" viewBox="0 0 20 20"><circle cx="9.5" cy="10" r="8" fill="#E66000"/><circle cx="11" cy="8" r="5" fill="#2E5EB8"/><path d="M3 6Q6 16 15 16Q9 12 8 6Z" fill="#F59B00"/></svg><svg class="a" style="left:182px;top:997px" width="20" height="20" viewBox="0 0 20 20"><circle cx="9" cy="10" r="8" fill="#C8C8C8" stroke="#777"/><circle cx="9" cy="10" r="5.5" fill="#222"/><text x="9" y="13" font-family="Liberation Sans" font-weight="bold" font-size="8" fill="#fff" text-anchor="middle">D</text></svg><svg class="a" style="left:208px;top:997px" width="20" height="20" viewBox="0 0 20 20"><rect x="0.5" y="1.5" width="19" height="17" fill="#fff" stroke="#999"/><path d="M4 7L9 3L16 10L11 15Z" fill="#888" stroke="#333"/><rect x="14" y="14" width="2" height="2" fill="#000"/><rect x="9" y="9" width="2" height="1" fill="#d00"/></svg><svg class="a" style="left:235px;top:997px" width="20" height="20" viewBox="0 0 20 20"><rect x="0" y="1" width="20" height="18" fill="#E8E8F0"/><path d="M0 4h20M0 7h20M0 10h20M0 13h20M0 16h20" stroke="#C8C8D0"/><path d="M3 16L15 3" stroke="#1E1EFF" stroke-width="2"/><path d="M10 8V16M6 18L10 14L14 18" stroke="#1E1EFF" stroke-width="2" fill="none"/><path d="M6 6Q10 11 13 5" stroke="#22AA22" stroke-width="1.5" fill="none"/></svg><svg class="a" style="left:262px;top:997px" width="20" height="20" viewBox="0 0 20 20"><rect x="3" y="1" width="13" height="18" rx="2" fill="#8AB0E8" stroke="#5577AA"/><rect x="5" y="3" width="9" height="3" fill="#E0F0FF"/><path d="M5 9h2M8 9h2M11 9h2M5 12h2M8 12h2M11 12h2M5 15h2M8 15h2M11 15h2" stroke="#fff" stroke-width="1.5"/></svg><svg class="a" style="left:308px;top:996px" width="10" height="7" viewBox="0 0 10 7"><path d="M1 0.5L4 3L1 5.5M5 0.5L8 3L5 5.5" fill="none" stroke="#2A2A00" stroke-width="1.6"/></svg><div class="btn" style="left:327px;width:115px">Steuerun...</div><div class="btn" style="left:444px;width:115px">Unbenan...</div><div class="btn" style="left:561px;width:115px">2 BAS...</div><div class="btn" style="left:677px;width:115px">David</div><div class="btn" style="left:795px;width:115px">N:\Prüffel...</div><div class="btn" style="left:913px;width:114px">Encoder....</div><svg class="a" style="left:335px;top:997px" width="20" height="20" viewBox="0 0 20 20"><circle cx="9.5" cy="10" r="8" fill="#E66000"/><circle cx="11" cy="8" r="5" fill="#2E5EB8"/><path d="M3 6Q6 16 15 16Q9 12 8 6Z" fill="#F59B00"/></svg><svg class="a" style="left:452px;top:997px" width="20" height="20" viewBox="0 0 20 20"><path d="M3 2H13L17 6V19H3Z" fill="#fff" stroke="#777"/><rect x="1" y="3" width="10" height="3" fill="#3A7BD5"/><path d="M6 10h8M6 13h8M6 16h6" stroke="#666"/></svg><svg class="a" style="left:569px;top:997px" width="20" height="20" viewBox="0 0 20 20"><rect x="1" y="1" width="18" height="18" fill="#3399FF" stroke="#555"/><path d="M19 1V19H1Z" fill="#FFEE00"/><text x="4" y="9" font-family="Liberation Sans" font-weight="bold" font-size="8" fill="#fff">B</text><text x="9" y="17" font-family="Liberation Sans" font-weight="bold" font-size="5" fill="#2255AA">AVR</text></svg><div class="a" style="left:664px;top:1004px"><svg width="9" height="5" style="display:block"><path d="M0 0H9L4.5 5Z" fill="#333"/></svg></div><svg class="a" style="left:686px;top:997px" width="20" height="20" viewBox="0 0 20 20"><circle cx="9" cy="10" r="8" fill="#C8C8C8" stroke="#777"/><circle cx="9" cy="10" r="5.5" fill="#222"/><text x="9" y="13" font-family="Liberation Sans" font-weight="bold" font-size="8" fill="#fff" text-anchor="middle">D</text></svg><svg class="a" style="left:803px;top:997px" width="20" height="20" viewBox="0 0 20 20"><path d="M1 5H7L9 7H18V17H1Z" fill="#E8C050" stroke="#B08820"/><path d="M1 9H19V17H1Z" fill="#F5D870"/></svg><svg class="a" style="left:921px;top:997px" width="20" height="20" viewBox="0 0 20 20"><path d="M4 1H13L17 5V19H4Z" fill="#fff" stroke="#888"/><rect x="1" y="2" width="9" height="4" fill="#D00"/><path d="M7 15Q10 6 11 10Q12 14 15 14" stroke="#D00" fill="none" stroke-width="1.3"/></svg><div class="a" style="left:1029px;top:994px;width:116px;height:28px;border-radius:3px;background:linear-gradient(#7F8E6E,#8A997A 30%,#909F80);border:1px solid #6E7D5E;box-shadow:inset 1px 1px 2px #5F6E50"></div><svg class="a" style="left:1038px;top:997px" width="20" height="20" viewBox="0 0 20 20"><path d="M3 17L6 11L4 7L9 9L12 3L13 7L16 5L14 11L17 14L11 14L8 18Z" fill="#E82020"/><path d="M12 3L15 2L14 5" fill="#F44"/></svg><div class="a" style="left:1062px;top:999px;font-size:13px;color:#fff;white-space:nowrap"><span style="color:#222">3</span>&nbsp;eagle</div><div class="a" style="left:1134px;top:1004px"><svg width="9" height="5" style="display:block"><path d="M0 0H9L4.5 5Z" fill="#2A2A10"/></svg></div><div class="a" style="left:1158px;top:997px;width:17px;height:20px;background:#9EAA88"></div><div class="a" style="left:1157px;top:999px;font-size:13px;color:#fff;letter-spacing:-0.5px">DE</div><div class="a" style="left:1188px;top:990px;width:92px;height:34px;background:linear-gradient(#B9AF72 0px,#FFF8D8 1px,#F2E9B8 3px,#E9DFAA 10px,#E5DBA4 26px,#DDD298 34px);border-left:1px solid #A9A072"></div><svg class="a" style="left:1177px;top:998px" width="19" height="19" viewBox="0 0 19 19"><circle cx="9.5" cy="9.5" r="8.5" fill="#A8693F" stroke="#E8D8C0"/><path d="M11 5L7 9.5L11 14" stroke="#fff" stroke-width="2.4" fill="none"/></svg><svg class="a" style="left:1199px;top:998px" width="19" height="19" viewBox="0 0 19 19"><circle cx="9.5" cy="9.5" r="8.5" fill="#E03838"/><text x="9.5" y="12" font-family="Liberation Sans" font-weight="bold" font-size="7" fill="#fff" text-anchor="middle">96</text></svg><div class="a" style="left:1227px;top:998px;font-size:13px;color:#2A2A00;letter-spacing:1.2px">09:17</div>
</body></html>
